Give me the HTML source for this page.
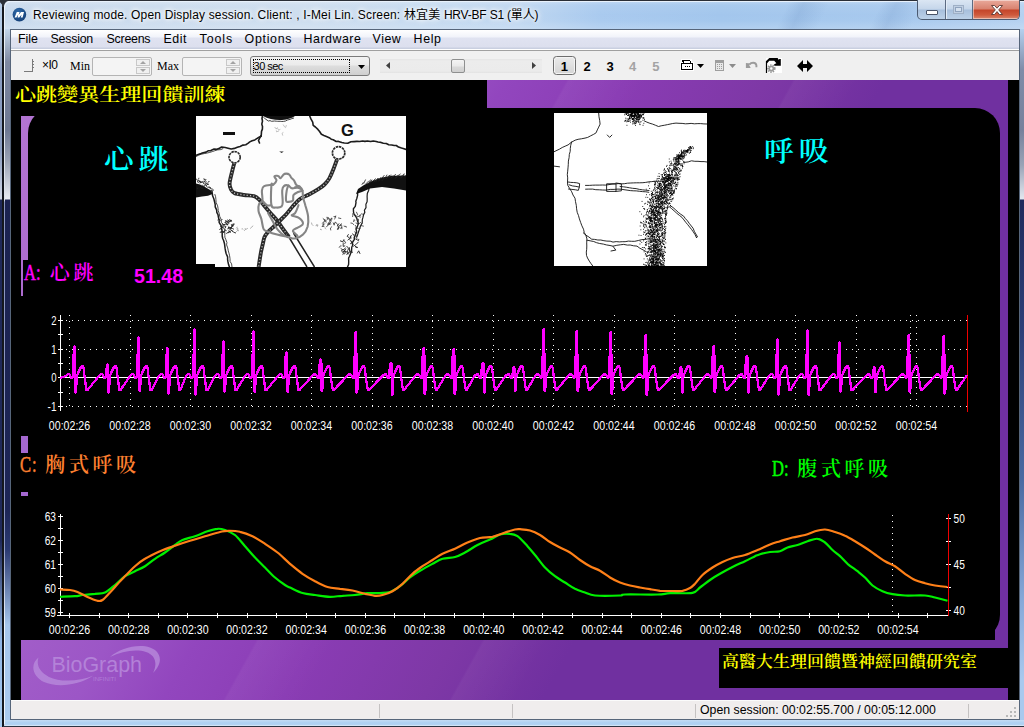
<!DOCTYPE html>
<html lang="zh-Hant">
<head>
<meta charset="utf-8">
<title>Reviewing mode. Open Display session.</title>
<style>
html,body{margin:0;padding:0;}
body{width:1024px;height:727px;overflow:hidden;position:relative;background:#b9d1ea;font-family:"Liberation Sans","Noto Sans CJK TC",sans-serif;font-size:12px;color:#000;}
.abs{position:absolute;}
#frame{left:0;top:0;width:1024px;height:727px;background:linear-gradient(90deg,#c6d8ec 0,#cbdcee 300px,#bcd5f0 520px,#a6c8ee 600px,#9fc4ec 720px,#a4c7ed 900px,#b2cff0 1024px);}
#titlegrad{left:4px;top:1px;width:1020px;height:28px;background:linear-gradient(115deg,rgba(60,100,160,0) 0,rgba(60,100,160,0) 76%,rgba(60,100,160,.13) 77.5%,rgba(60,100,160,0) 80%,rgba(60,100,160,0) 85%,rgba(60,100,160,.12) 86.5%,rgba(60,100,160,0) 89%),linear-gradient(180deg,rgba(255,255,255,.30) 0,rgba(255,255,255,.10) 4px,rgba(255,255,255,.04) 14px,rgba(255,255,255,.06) 20px,rgba(255,255,255,.2) 28px);}
#lglass{left:4px;top:29px;width:7px;height:691px;background:linear-gradient(180deg,#c3d6eb 0,#7f89a2 33px,#6e7892 101px,#99a1b3 131px,#e9ecf2 170px,#1b2250 171px,#1d2556 481px,#2b3a72 521px,#a6c6ec 596px,#aacbef 691px);}
#rglass{left:1019px;top:29px;width:5px;height:691px;background:linear-gradient(180deg,#b4d0ee 0,#7f8ca8 41px,#76819c 101px,#99a3b6 136px,#e3e7ef 170px,#202a5c 171px,#2d3f78 301px,#4a6aa2 451px,#86a8d8 571px,#a9c9ee 651px,#a9c9ee 691px);}
#lstrip0{left:0;top:0;width:2px;height:727px;background:linear-gradient(180deg,#b4cbe6 0,#b4cbe6 28px,#8a9cc0 70px,#8a9cc0 150px,#d0d6e4 199px,#1f2858 200px,#1f2858 540px,#8fb4e4 640px,#a8ccf0 727px);}
#lstrip1{left:2px;top:0;width:2px;height:727px;background:#14171d;}
#lstrip2{left:4px;top:2px;width:1px;height:722px;background:linear-gradient(180deg,#eef5fc 0,#dfe3ea 198px,#8c96c0 200px,#8c96c0 540px,#eef5fc 620px);}
#tstrip1{left:3px;top:0;width:1021px;height:1px;background:#2a2e36;}
#tstrip2{left:5px;top:1px;width:1019px;height:1px;background:#e8f1fb;}
#bstrip{left:3px;top:726px;width:1021px;height:1px;background:#2c3442;}
#bstrip2{left:5px;top:720px;width:1019px;height:6px;background:linear-gradient(180deg,#c4dcf4 0,#aed0f2 3px,#b4d3f2 5px,#f0f6fc 6px);}
#title{left:33px;top:7px;height:16px;line-height:16px;font-size:12px;white-space:nowrap;letter-spacing:0.17px;text-shadow:0 0 6px #fff,0 0 6px #fff,0 0 3px #fff;}
#client{left:11px;top:30px;width:1008px;height:689px;background:#f0f0f0;outline:1px solid #56657a;overflow:hidden;}
#cw{left:-1px;top:-1px;width:1009px;height:690px;}
#menubar{left:0;top:1px;width:1009px;height:19px;background:linear-gradient(180deg,#ffffff 0,#f1f3fa 7px,#e0e3f1 8px,#dcdfee 17px,#c9cfe0 18px,#c9cfe0 19px);border-bottom:1px solid #fff;}
.mi{position:absolute;top:1px;height:16px;line-height:16px;font-size:12.4px;white-space:nowrap;letter-spacing:-0.3px;}
#toolbar{left:0;top:21px;width:1009px;height:30px;background:#f0f0f0;border-top:1px solid #a0a0a0;box-sizing:border-box;}
#status{left:0;top:671px;width:1009px;height:19px;background:#f0eded;border-top:1px solid #fbfbfb;box-sizing:border-box;}
.sep{position:absolute;top:3px;width:1px;height:14px;background:#c5c2c2;}
#stext{left:690px;top:2px;font-size:12.3px;line-height:15px;white-space:nowrap;}
.spin{position:absolute;top:28px;height:17px;width:58px;border:1px solid #b4b4b4;border-radius:2px;background:#f4f4f4;}
.spin i{position:absolute;right:1px;width:14px;height:7px;border:1px solid #c8c8c8;background:#f0f0f0;box-sizing:border-box;}
.spin i.u::after{content:"";position:absolute;left:3px;top:1px;border-left:3px solid transparent;border-right:3px solid transparent;border-bottom:3px solid #a3a3a3;}
.spin i.d::after{content:"";position:absolute;left:3px;top:1px;border-left:3px solid transparent;border-right:3px solid transparent;border-top:3px solid #a3a3a3;}
.tb{position:absolute;font-size:12px;white-space:nowrap;}
.serif{font-family:"Liberation Serif","Noto Serif CJK SC",serif;}
.cjk{font-family:"Liberation Serif","Noto Serif CJK SC",serif;font-weight:600;white-space:nowrap;position:absolute;}
.hw{display:inline-block;width:12px;text-align:center;font-weight:400;font-size:23px;transform:scaleX(.72);transform-origin:0 50%;text-align:left;-webkit-text-stroke:0.5px currentColor;}
.fw{display:inline-block;width:23.6px;text-align:center;}
.capbtn{position:absolute;top:1px;height:18px;box-sizing:border-box;}
</style>
</head>
<body>
<div id="frame" class="abs"></div>
<div id="titlegrad" class="abs"></div>
<div id="lglass" class="abs"></div><div id="rglass" class="abs"></div><div id="lstrip0" class="abs"></div><div id="lstrip1" class="abs"></div><div id="lstrip2" class="abs"></div>
<div id="tstrip1" class="abs"></div><div id="tstrip2" class="abs"></div><div id="bstrip2" class="abs"></div><div id="bstrip" class="abs"></div>

<svg class="abs" style="left:0;top:0" width="12" height="10" viewBox="0 0 12 10"><path d="M0,0 H11 L8,1 C5.5,1.8 4.2,3.5 4,7 L2,7 L2,4.5 L0,2.2 Z" fill="#2b3038"/><path d="M10,1.6 C7,2 5,3.6 4.6,8" fill="none" stroke="#eef5fc" stroke-width="1"/></svg>
<!-- app icon -->
<svg class="abs" style="left:12px;top:7px" width="15" height="15" viewBox="0 0 15 15">
<defs><radialGradient id="ig" cx="0.4" cy="0.3" r="0.8"><stop offset="0" stop-color="#2f6aa8"/><stop offset="1" stop-color="#123c74"/></radialGradient></defs>
<circle cx="7.4" cy="7.6" r="6.8" fill="url(#ig)"/>
<path d="M2.6 10.4 L4.8 5 L7.6 5 L6.6 8 L9 5 L12 5 L10.6 10.4 L8.8 10.4 L9.6 7.6 L7.2 10.4 L5.6 10.4 L6.2 7.4 L4.4 10.4 Z" fill="#fff"/>
</svg>
<div id="title" class="abs">Reviewing mode. Open Display session. Client: , I-Mei Lin. Screen: 林宜美 <span style="letter-spacing:-0.2px">HRV-BF S1 (單人)</span></div>

<!-- caption buttons -->
<div class="abs" style="left:917px;top:0;width:103px;height:20px;border:1px solid #4b5a70;border-top:none;border-radius:0 0 5px 5px;box-sizing:border-box;overflow:hidden;background:linear-gradient(180deg,#dbe6f3 0,#c5d6ea 9px,#a7bfdc 10px,#bcd1e8 19px);">
  <div class="abs" style="left:27px;top:0;width:1px;height:19px;background:#5c6b82"></div>
  <div class="abs" style="left:28px;top:0;width:1px;height:19px;background:#e3ecf6"></div>
  <div class="abs" style="left:54px;top:0;width:1px;height:19px;background:#5c6b82"></div>
  <div class="abs" style="left:55px;top:0;width:47px;height:19px;background:linear-gradient(180deg,#e9a99b 0,#d8826f 9px,#c4452a 10px,#cf5a3c 15px,#dc8a70 19px);box-shadow:inset 0 0 0 1px rgba(255,255,255,.45);"></div>
  <div class="abs" style="left:8px;top:10px;width:10px;height:3px;background:#fff;border:1px solid #4a5468;border-radius:1px"></div>
  <div class="abs" style="left:35px;top:5px;width:9px;height:7px;border:1px solid #9fb0c6;background:#d5e1ef;box-shadow:inset 0 0 0 1px #c0cfe2, inset 0 0 0 2px #8fa3be;"></div>
  <svg class="abs" style="left:72px;top:4px" width="14" height="12" viewBox="0 0 14 12"><path d="M1.5 1.5 L4.6 1.5 L7 4.2 L9.4 1.5 L12.5 1.5 L8.7 5.9 L12.5 10.5 L9.4 10.5 L7 7.6 L4.6 10.5 L1.5 10.5 L5.3 5.9 Z" fill="#fff" stroke="#5a3630" stroke-width="0.9"/></svg>
</div>

<div id="client" class="abs"><div id="cw" class="abs">
  <div id="menubar" class="abs">
    <span class="mi" style="left:8.0px;letter-spacing:0.00px">File</span>
    <span class="mi" style="left:40.6px;letter-spacing:-0.25px">Session</span>
    <span class="mi" style="left:96.6px;letter-spacing:-0.25px">Screens</span>
    <span class="mi" style="left:153.6px;letter-spacing:0.50px">Edit</span>
    <span class="mi" style="left:189.6px;letter-spacing:0.90px">Tools</span>
    <span class="mi" style="left:234.6px;letter-spacing:0.70px">Options</span>
    <span class="mi" style="left:293.6px;letter-spacing:0.50px">Hardware</span>
    <span class="mi" style="left:362.6px;letter-spacing:0.50px">View</span>
    <span class="mi" style="left:403.6px;letter-spacing:0.60px">Help</span>
  </div>
  <div id="toolbar" class="abs"></div>
  <!-- toolbar contents, coordinates relative to client (x-10,y-29) -->
  <svg class="abs" style="left:12px;top:29px" width="12" height="15" viewBox="0 0 12 15" shape-rendering="crispEdges"><path d="M1.5 13.5 H10.5 V0.5 M10.5 3.5 h1 M10.5 6.5 h1 M10.5 9.5 h1" stroke="#7a7a7a" fill="none"/></svg>
  <div class="tb" style="left:32px;top:29px;font-size:12px;letter-spacing:-0.5px;">×I0</div>
  <div class="tb serif" style="left:60px;top:30px;font-size:12px;">Min</div>
  <div class="spin" style="left:82px"><i class="u" style="top:1px"></i><i class="d" style="top:9px"></i></div>
  <div class="tb serif" style="left:147px;top:30px;font-size:12px;">Max</div>
  <div class="spin" style="left:172px"><i class="u" style="top:1px"></i><i class="d" style="top:9px"></i></div>
  <!-- combo -->
  <div class="abs" style="left:240px;top:27px;width:118px;height:18px;border:1px solid #7a7a7a;border-radius:3px;background:linear-gradient(180deg,#f2f2f2 0,#ebebeb 8px,#dddddd 9px,#cfcfcf 18px);"></div>
  <div class="abs" style="left:243px;top:30px;width:95px;height:12px;border:1px dotted #000;"></div>
  <div class="tb" style="left:243.6px;top:30.5px;font-size:11px;line-height:13px;letter-spacing:-0.55px;">30 sec</div>
  <svg class="abs" style="left:348px;top:36px" width="7" height="4"><path d="M0 0 H7 L3.5 4 Z" fill="#000"/></svg>
  <!-- scrollbar -->
  <div class="abs" style="left:370px;top:30px;width:161.5px;height:14px;background:linear-gradient(180deg,#e4e4e4 0,#ececec 2px,#ebebeb 12px,#e2e2e2 14px);"></div>
  <svg class="abs" style="left:376px;top:33px" width="4" height="7"><path d="M4 0 V7 L0 3.5 Z" fill="#404040"/></svg>
  <svg class="abs" style="left:522px;top:33px" width="4" height="7"><path d="M0 0 V7 L4 3.5 Z" fill="#404040"/></svg>
  <div class="abs" style="left:440.5px;top:30px;width:12.5px;height:11.6px;border:1px solid #8e8f8f;border-radius:2px;background:linear-gradient(180deg,#f4f4f4 0,#e9e9e9 6px,#d9d9d9 7px,#d0d0d0 12px);"></div>
  <!-- page buttons -->
  <div class="abs" style="left:543.3px;top:27.2px;width:20.6px;height:17.2px;border:1px solid #6e6e6e;border-radius:3.5px;background:linear-gradient(180deg,#ebebeb,#d4d4d4);box-shadow:inset 0 0 0 1px #f4f4f4;"></div>
  <div class="tb" style="left:544.4px;top:29.5px;width:20px;text-align:center;font-size:13px;line-height:16px;font-weight:bold;color:#000;">1</div>
  <div class="tb" style="left:567.0px;top:29.5px;width:20px;text-align:center;font-size:13px;line-height:16px;font-weight:bold;color:#000;">2</div>
  <div class="tb" style="left:590.0px;top:29.5px;width:20px;text-align:center;font-size:13px;line-height:16px;font-weight:bold;color:#000;">3</div>
  <div class="tb" style="left:612.5px;top:29.5px;width:20px;text-align:center;font-size:13px;line-height:16px;font-weight:bold;color:#a3a3a3;">4</div>
  <div class="tb" style="left:635.9px;top:29.5px;width:20px;text-align:center;font-size:13px;line-height:16px;font-weight:bold;color:#a3a3a3;">5</div>
  <!-- printer -->
  <svg class="abs" style="left:670px;top:30px" width="14" height="12" viewBox="680 59 14 12" shape-rendering="crispEdges"><path d="M680,62 h14 v9 h-14 z M681,59 h11 v4 h-11 z" fill="#fff"/><path d="M682.5,60.5 H689.5 L691.5,63.5 H684 Z" fill="#fff" stroke="#000"/><path d="M681.5,63.5 H692.5 V69.5 H681.5 Z" fill="#fff" stroke="#000" stroke-width="1.2"/><path d="M685,66.5 h1 M687,66.5 h1 M689,66.5 h1" stroke="#000"/></svg>
  <svg class="abs" style="left:687px;top:35px" width="7" height="4"><path d="M0 0 H7 L3.5 4 Z" fill="#000"/></svg>
  <!-- calendar -->
  <svg class="abs" style="left:705px;top:31px" width="9" height="11" viewBox="0 0 9 11" shape-rendering="crispEdges"><path d="M0.5 0.5 H8.5 V10.5 H0.5 Z" fill="#e8e8e8" stroke="#9e9e9e"/><path d="M0 1.5 H9" stroke="#9e9e9e" stroke-width="2"/><path d="M2 4.5h1m1 0h1m1 0h1M2 6.5h1m1 0h1m1 0h1M2 8.5h1m1 0h1m1 0h1" stroke="#9e9e9e"/></svg>
  <svg class="abs" style="left:719px;top:35px" width="7" height="4"><path d="M0 0 H7 L3.5 4 Z" fill="#8c8c8c"/></svg>
  <!-- undo -->
  <svg class="abs" style="left:735px;top:32px" width="13" height="9" viewBox="745 61 13 9"><path d="M745.9,63 L750.7,63.4 L749.2,65 L750.7,67.9 L745.9,67.9 Z" fill="#9c9c9c"/><path d="M749.6,64.6 C751,62.2 755.6,61.8 756.4,65.2 L756.4,67.2" fill="none" stroke="#9c9c9c" stroke-width="1.9"/></svg>
  <!-- refresh -->
  <div class="abs" style="left:755.6px;top:28.7px;width:16.4px;height:15.3px;background:#fff;"></div>
  <svg class="abs" style="left:755px;top:28px" width="18" height="17" viewBox="765 57 18 17"><path d="M765.9,73 L765.9,61.3 L769.3,57.9 L777.6,57.9 L779.1,60.3 L779.1,58.9 L780.8,58.9 L780.8,65.7 L774.2,65.7 L774.2,64.3 L776.4,63.3 L774.2,60.8 L769.3,60.8 L767.1,63.3 L767.1,73 Z" fill="#000"/><circle cx="771.3" cy="68.6" r="3.1" fill="none" stroke="#999" stroke-width="2.4" stroke-dasharray="1.25 0.95"/><circle cx="771.3" cy="68.6" r="2.1" fill="none" stroke="#999" stroke-width="1.7"/></svg>
  <!-- double arrow -->
  <svg class="abs" style="left:787px;top:31px" width="16" height="12" viewBox="0 0 16 12"><path d="M0 6 L6 0 V4 H10 V0 L16 6 L10 12 V8 H6 V12 Z" fill="#000"/></svg>

  <div id="status" class="abs">
    <div class="sep" style="left:369px"></div>
    <div class="sep" style="left:502px"></div>
    <div class="sep" style="left:685px"></div>
    <div class="sep" style="left:958px"></div>
    <div id="stext" class="abs">Open session: 00:02:55.700 / 00:05:12.000</div>
    <svg class="abs" style="left:995px;top:5px" width="12" height="12" shape-rendering="crispEdges"><path d="M9 1h2v2h-2zM9 5h2v2h-2zM9 9h2v2h-2zM5 5h2v2h-2zM5 9h2v2h-2zM1 9h2v2h-2z" fill="#b8b8b8"/></svg>
  </div>
</div></div>

<!-- SCREEN -->
<div class="abs" id="screen" style="left:11px;top:80px;width:1008px;height:620px;background:#000;overflow:hidden;"><div class="abs" style="left:-1px;top:0;width:1009px;height:620px;">
  <!-- purple background 21..1008 -> local 11..998 -->
  <div class="abs" style="left:11px;top:0;width:987px;height:620px;background:linear-gradient(119deg,rgba(255,255,255,0) 0,rgba(255,255,255,0) 41%,rgba(255,255,255,.045) 41.2%,rgba(255,255,255,.0) 47%,rgba(255,255,255,0) 58%,rgba(255,255,255,.04) 58.2%,rgba(255,255,255,0) 63%),linear-gradient(119deg,#b478d4 0,#b070d0 5%,#9c56c6 30%,#9246be 36.5%,#8a3cb4 45.5%,#7e38a6 56%,#7030a0 65%,#7030a0 100%);"></div>
  <!-- black rounded panel x 28..1000 y 108..640 -->
  <div class="abs" style="left:18px;top:28px;width:972px;height:532px;background:#000;border-radius:25px;"></div>
  <!-- chart rects covering -->
  <div class="abs" style="left:11px;top:216px;width:974px;height:344px;background:#000;"></div>
  <div class="abs" style="left:13px;top:180px;width:100px;height:40px;background:#000;"></div>
  <!-- title label -->
  <div class="abs" style="left:0;top:0;width:477px;height:36px;background:#000;"></div>
  <!-- left-side black covers leaving purple bits -->
  <!-- bottom label box -->
  <div class="abs" style="left:709px;top:568px;width:300px;height:40px;background:#000;"></div>
</div></div>

<!-- purple bits on left below 295 -->
<div class="abs" style="left:21px;top:436px;width:7px;height:17px;background:#a468cf;"></div>
<div class="abs" style="left:21px;top:492px;width:7px;height:4px;background:#a468cf;"></div>

<!-- sketches -->
<svg class="abs" style="left:196px;top:116px" width="210" height="151" viewBox="0 0 210 151">
<rect width="210" height="151" fill="#fdfdfd"/>
<g fill="none" stroke="#1c1c1c" stroke-width="1.6" stroke-linecap="round" stroke-linejoin="round">
<path d="M-0.0,39.3 L2.9,38.3 L5.0,37.6 L7.2,36.7 L10.1,36.1 L12.1,34.8 L14.8,34.6 L18.1,33.1 L21.0,33.3 L23.4,32.2 L25.7,31.0 L29.2,31.5 L32.1,32.2 L35.2,33.0 L38.4,32.4 L41.3,31.3 L44.1,30.4 L47.0,29.1 L49.8,28.7 L51.9,27.4 L53.8,25.9 L56.1,24.7 L58.8,23.9 L62.0,21.8 L65.2,20.2 L65.5,15.4 L66.4,13.1 L66.5,10.5 L65.8,8.1 L66.5,5.1 L66.0,2.5 L66.4,0.0"/>
<path d="M0.4,40.4 L2.5,39.2 L5.3,38.2 L8.6,37.5 L11.2,37.0 L13.8,36.4 L16.3,35.6 L18.9,34.7 L21.6,33.9 L24.8,33.6 L27.0,32.6" stroke-width="0.8"/>
<path d="M64.8,19.9 L62.5,24.5 L63.5,27" />
<path d="M113.8,0.3 L114.9,2.9 L116.7,6.1 L117.2,9.3 L119.4,11.0 L121.9,13.4 L123.6,15.5 L125.4,18.3 L127.9,19.5 L130.4,20.5 L133.2,21.7 L135.2,23.2 L137.2,23.7 L140.2,25.5 L142.5,25.4 L145.9,26.5 L148.3,27.0 L151.8,27.2 L154.9,25.8 L158.1,25.6 L160.9,25.4 L163.6,25.5 L166.6,25.0 L168.9,25.4 L171.5,25.0 L174.6,25.5 L177.3,25.0 L180.2,25.5 L182.0,26.0 L185.0,26.4 L187.3,27.2 L190.3,27.5 L192.7,28.7 L195.8,29.0 L198.2,29.5 L200.3,29.5 L202.5,31.1 L205.5,32.1 L207.2,32.6 L210.0,33.4"/>
<path d="M15.9,74.6 L16.3,77.6 L16.6,79.8 L17.9,83.0 L18.5,85.5 L19.2,88.5 L19.2,90.9 L20.6,93.8 L20.8,96.3 L22.0,98.7 L22.4,101.1 L23.1,104.0 L23.2,106.6 L25.1,109.5 L25.5,111.6 L26.0,114.5 L26.2,117.4 L26.2,120.0 L26.7,122.5 L27.7,124.7 L28.5,127.7 L28.9,130.9 L29.1,132.4 L29.7,135.8 L30.2,137.7 L31.6,140.9 L31.6,143.7 L32.0,146.0 L32.5,148.3 L33.4,151.0" stroke-width="1.5"/>
<path d="M18.9,78.5 L19.6,80.7 L19.9,83.4 L20.1,86.5 L21.6,89.8 L22.1,92.7 L22.2,94.6 L23.2,97.4 L23.7,100.3 L25.0,103.1 L25.4,106.3 L27.0,108.5 L26.7,110.7 L28.4,113.4 L28.8,116.7 L28.8,119.5 L28.9,121.3 L29.9,123.7 L30.9,126.5 L30.6,128.9 L31.7,131.9 L32.3,134.9 L33.2,138.0 L33.6,139.8 L34.0,142.5 L34.1,145.5 L35.6,147.9 L36.0,151.0" stroke-width="0.8"/>
<path d="M161.6,76.5 L161.6,79.4 L160.8,82.5 L159.8,85.2 L160.0,86.7 L159.3,90.4 L157.4,92.7 L157.5,96.1 L158.0,97.8 L159.8,100.5 L160.8,102.3 L161.3,104.2 L162.4,107.5 L161.5,110.1 L160.1,113.2 L160.7,116.2 L159.3,118.7 L158.2,121.7 L158.4,123.4 L156.5,126.3 L156.6,129.5 L155.8,131.0 L155.6,133.7 L155.0,136.6 L153.5,140.3 L152.6,142.0 L152.7,145.8 L152.6,148.5 L151.5,151.0" stroke-width="1.4"/>
<path d="M173.1,72.0 L172.7,74.2 L171.3,77.5 L171.1,80.5 L171.2,83.0 L171.1,85.8 L169.9,88.2 L170.0,91.6 L168.4,94.2 L168.8,96.4 L167.6,98.6 L166.9,101.7 L166.3,103.7 L166.2,107.0 L164.4,110.2 L163.7,112.6 L162.9,114.8 L161.8,118.1 L160.8,121.0" stroke-width="1.2"/>
</g>
<path d="M67,0 C72,3.2 80,4.4 86,4 C92,3.6 96,2 99,0 Z" fill="#111"/>
<path d="M67.5,1.5 L68.4,2.1 L69.9,3.3 L72.4,5.0 L74.0,4.6 L75.6,5.3 L78.5,5.0 L80.3,5.2 L81.6,5.3 L84.2,5.3 L85.8,5.5 L87.5,5.4 L89.5,5.0 L91.7,3.9 L94.0,3.4 L95.9,2.6 L98.0,2.0" fill="none" stroke="#111" stroke-width="0.8"/>
<path d="M0,67.5 L4,68.5 L9,71 L15,74.5 L16.5,78 L12,79.8 L6,80.5 L0,81.5 Z" fill="#111"/>
<path d="M0.0,62.5 L1.1,64.1 L3.2,64.8 L5.0,65.8 L6.5,66.1 L7.8,67.9 L9.6,68.2 L10.2,70.1 L11.6,71.2 L14.0,71.0 L14.6,72.8 L16.2,72.9 L18.0,74.5" fill="none" stroke="#222" stroke-width="0.8"/>
<path d="M11.8,66.8 l1.3,-1.6 l-0.4,0.8 M1.2,64.8 l0.8,1.8 l2.1,-1.7 M7.6,69.8 l0.0,0.8 l-1.4,-1.9 M2.4,63.3 l0.2,0.1 l0.3,-1.6 M3.4,64.8 l1.5,2.2 l1.9,-1.8 M1.8,71.6 l-0.2,1.2 l-0.8,-0.1 M7.7,66.9 l0.4,-2.1 l0.9,1.5 M3.4,67.1 l1.1,-0.4 l-1.3,-1.5 M7.7,63.1 l1.7,1.3 l0.9,1.6 M9.2,66.6 l0.4,0.0 l2.1,1.3 M4.4,71.2 l1.1,1.2 l1.4,-0.4 M12.7,70.9 l0.9,1.2 l1.2,-0.4 M10.4,63.6 l-0.7,-0.1 l-2.2,-0.6 M9.3,68.6 l-1.2,2.0 l0.7,-0.7 M9.6,68.1 l0.1,-0.5 l2.2,0.6 M10.1,69.9 l2.1,-2.1 l0.5,1.1" fill="none" stroke="#222" stroke-width="0.8"/>
<path d="M210,59.5 L196,59.8 L186,61.5 L176,65 L168,69 L162,73 L160,78 L166,76 L174,72.5 L186,71 L198,72.5 L210,74.5 Z" fill="#111"/>
<path d="M165.8,68.8 l1.6,-2.5 M167.6,67.8 l2.0,-4.3 M169.5,68.2 l3.4,-3.4 M171.6,68.0 l3.1,-2.2 M172.9,67.8 l1.6,-4.3 M174.2,66.8 l1.8,-3.2 M176.3,65.6 l3.4,-3.1 M177.9,66.3 l2.2,-2.7 M179.8,65.8 l2.1,-3.8 M181.1,64.2 l2.0,-2.1 M182.7,65.3 l2.3,-4.2 M184.9,63.5 l3.5,-4.4 M186.0,64.8 l2.4,-3.2 M188.6,63.0 l2.5,-4.3 M190.0,63.1 l3.5,-4.0 M191.6,61.9 l2.7,-3.1 M192.9,61.4 l2.6,-2.3 M194.8,62.2 l2.4,-2.7 M196.7,61.3 l3.1,-3.3 M198.8,62.4 l3.0,-2.6 M199.6,62.3 l3.1,-3.6 M201.6,61.0 l2.9,-3.4 M203.5,61.8 l3.0,-2.5 M204.8,62.5 l3.3,-4.2 M206.3,60.6 l2.0,-3.1 M208.6,60.7 l2.6,-2.2" fill="none" stroke="#222" stroke-width="0.8"/>
<path d="M25.2,112.5 l0.3,0.7 l-0.7,-0.1 M26.9,107.8 l1.3,1.8 l-2.2,-2.0 M35.3,111.7 l1.4,-1.5 l-0.4,-1.3 M35.3,108.2 l0.8,2.5 l-0.9,0.3 M34.4,115.9 l-0.4,-0.7 l-2.1,2.0 M25.1,104.2 l0.3,-0.1 l1.0,-1.0 M34.9,104.1 l-1.5,0.8 l-2.2,-1.0 M34.1,112.7 l-1.1,-1.9 l-0.7,1.2 M29.1,104.6 l1.1,0.4 l2.2,2.3 M36.8,109.1 l1.6,-1.0 l-0.9,-0.5 M37.1,115.5 l-1.3,-0.7 l-0.7,-0.7 M29.5,108.4 l-1.6,0.3 l1.5,0.2 M35.7,110.9 l-1.7,1.3 l2.0,-1.1 M24.3,110.2 l0.2,0.4 l2.4,0.8 M35.3,103.9 l0.2,1.5 l-2.2,-2.2 M34.3,115.6 l-2.2,0.7 l-1.9,1.3 M33.1,106.4 l-1.5,1.4 l0.1,1.4 M29.5,107.7 l2.4,0.9 l-0.0,0.2 M34.1,112.9 l2.2,-0.5 l1.7,0.9 M35.9,114.3 l1.7,2.0 l2.4,0.7 M31.3,112.9 l1.6,-0.4 l-0.4,-1.8 M34.4,116.9 l-0.6,-1.7 l-1.5,-0.4 M28.1,116.6 l-2.3,-1.0 l-2.0,0.8 M34.9,105.5 l-2.3,-0.2 l0.4,2.1 M24.5,104.5 l-1.6,-1.5 l-1.4,1.1 M32.3,106.1 l-1.6,-1.1 l-1.7,1.3 M28.4,110.7 l1.6,-0.1 l-1.2,2.0 M36.8,107.8 l0.2,2.4 l-0.1,-1.5 M24.7,116.3 l1.6,-0.6 l0.1,0.1 M27.8,116.9 l0.8,-1.4 l-2.5,-0.1 M29.2,114.2 l1.1,0.6 l-1.8,-1.8 M28.5,106.6 l1.9,0.1 l0.7,2.6 M27.7,110.5 l-1.8,1.4 l-2.6,1.7 M35.8,114.5 l-2.2,-1.2 l1.1,-2.1" fill="none" stroke="#222" stroke-width="0.9"/>
<path d="M48.6,112.8 l1.8,0.3 l1.4,-0.8 M54.2,112.5 l1.7,-1.6 l1.3,-1.2 M49.8,113.2 l-1.4,1.3 l-0.8,-0.8 M41.4,111.8 l-0.1,0.9 l-0.6,0.7 M41.9,112.4 l-0.2,1.9 l1.3,0.6 M40.2,112.3 l0.8,-1.1 l0.3,-0.2 M40.2,115.9 l1.2,-1.2 l0.5,-0.8 M46.8,113.2 l-0.8,-0.7 l-0.4,0.7" fill="none" stroke="#999" stroke-width="0.8"/>
<path d="M119.6,109.6 l0.9,-0.7 l1.8,0.3 M126.1,110.7 l1.3,-1.6 l-1.4,-1.6 M125.5,113.7 l-1.3,-0.4 l1.3,0.4 M117.3,109.8 l-1.4,-1.5 l-0.4,-1.7 M128.9,111.4 l0.0,0.6 l1.1,1.3 M121.4,110.7 l-0.4,-1.9 l-0.4,0.8" fill="none" stroke="#999" stroke-width="0.8"/>
<path d="M149.6,110.3 l1.0,0.7 l-2.9,-1.0 M134.2,108.5 l-2.4,-0.7 l0.1,1.7 M145.8,107.9 l-2.0,1.6 l2.4,0.3 M134.5,106.5 l-2.1,1.3 l2.9,0.1 M143.2,110.9 l-1.8,2.7 l0.8,-1.8 M128.0,103.2 l0.5,1.2 l-1.0,2.6 M134.7,106.0 l-2.3,2.8 l-2.2,2.4 M139.0,107.3 l0.4,-1.4 l2.5,3.0 M145.6,107.8 l-2.3,1.9 l-1.3,2.4 M131.8,107.5 l2.0,-1.9 l0.3,-2.5 M126.8,102.3 l2.9,2.6 l1.0,-1.2 M142.1,109.6 l-0.7,0.6 l1.8,-2.9 M130.8,106.1 l-2.1,-0.7 l0.4,-2.0 M138.5,103.4 l0.4,-1.0 l0.9,-2.8 M142.1,101.9 l2.8,0.6 l-0.2,-0.5 M141.0,109.0 l1.5,1.5 l-0.1,3.0 M146.1,111.1 l-0.5,-0.4 l0.4,2.4 M138.6,106.8 l-0.4,2.4 l-1.1,-2.7 M143.4,111.7 l1.4,0.6 l1.5,-1.2 M140.2,100.9 l-2.3,-0.3 l0.0,-0.6 M127.2,109.0 l0.2,-1.6 l-1.2,-0.6 M131.7,100.9 l2.5,2.8 l1.0,2.2 M136.1,110.5 l-1.7,1.5 l0.4,2.4 M128.4,110.3 l-2.3,0.2 l2.7,-3.0 M131.9,103.9 l-1.1,-2.6 l2.4,1.9 M135.5,104.6 l0.5,-2.7 l-2.8,2.4" fill="none" stroke="#333" stroke-width="0.8"/>
<path d="M150.5,130.0 l3.0,3.3 l-0.2,-2.1 M150.3,138.5 l2.8,-2.1 l2.4,-1.0 M153.5,123.4 l2.7,3.5 l-2.1,0.9 M148.4,137.6 l-3.1,-2.8 l1.6,-1.3 M161.2,137.4 l1.5,-2.6 l1.4,3.1 M153.0,121.6 l-1.9,-1.3 l1.5,-2.1 M148.3,124.7 l1.2,2.0 l-0.9,1.1 M160.9,131.8 l-1.9,-1.4 l3.0,1.2 M150.0,132.8 l-2.9,3.4 l-0.4,0.2 M154.6,120.9 l0.7,-1.5 l-1.7,2.1 M146.6,125.7 l1.8,-1.8 l-1.5,0.3 M148.4,137.9 l3.4,-3.3 l-0.3,1.8 M151.9,138.6 l-0.0,-2.2 l0.4,1.0 M151.5,133.2 l2.0,0.1 l0.0,2.4 M157.3,130.4 l3.2,-2.3 l2.0,-2.3 M155.9,124.7 l-0.4,1.9 l2.0,2.0 M149.2,129.8 l-2.0,0.6 l-0.0,-3.3 M155.7,134.3 l0.5,2.6 l-2.2,-2.4 M145.3,129.9 l-0.5,-0.4 l-1.7,2.1 M146.3,138.1 l0.5,0.3 l2.0,-1.8 M147.6,126.2 l-3.2,-1.3 l0.8,0.2 M149.8,131.8 l-2.9,2.2 l-2.3,-1.7 M147.9,133.8 l2.3,2.0 l-3.1,-0.6 M151.6,124.3 l3.3,-3.2 l-0.1,1.8 M162.8,122.9 l-0.3,1.7 l-3.2,-1.8 M161.0,122.8 l-0.7,-1.4 l-0.5,-3.0" fill="none" stroke="#222" stroke-width="0.9"/>
<path d="M156.4,117.9 l1.6,1.4 l-1.6,-1.5 M162.6,102.8 l-0.2,2.6 l-0.8,-1.0 M167.8,110.2 l-2.8,-0.6 l0.9,-2.6 M160.1,111.9 l2.2,0.5 l2.3,-0.2 M160.7,114.9 l-0.7,1.7 l-1.7,-0.9 M158.2,109.0 l-2.0,-1.8 l-1.7,-0.2 M159.7,106.9 l3.0,1.1 l2.2,-1.8 M160.6,99.5 l1.1,-0.8 l-1.4,-2.9 M158.2,103.2 l-0.6,2.5 l1.3,-1.4 M160.3,101.1 l2.6,-0.8 l1.6,1.3 M166.9,98.4 l-1.1,-0.7 l-2.5,2.3 M159.9,113.4 l0.1,-2.7 l-0.6,-1.6 M156.5,101.0 l0.6,-2.8 l-1.1,-0.5 M162.5,100.7 l1.2,-1.4 l1.4,1.0" fill="none" stroke="#333" stroke-width="0.8"/>
<path d="M81.6,11.4 l-1.1,1.1 l-0.5,-0.6 M89.5,11.6 l-1.0,-0.8 l-1.4,-2.3 M80.3,14.4 l0.3,1.5 l2.4,-1.0 M87.4,16.4 l-1.4,0.9 l0.8,2.3 M89.6,11.6 l0.7,-2.1 l-0.4,-0.5 M80.7,12.7 l-0.9,-0.0 l-1.1,-1.7 M84.4,13.3 l-1.7,0.8 l-1.3,-2.0" fill="none" stroke="#aaa" stroke-width="0.7"/>
<path d="M83.2,35.5 h4.5 l-2,1.6 z" fill="#222"/>
<rect x="27" y="16" width="12" height="3" fill="#111"/>
<text x="145" y="19.5" font-family="Liberation Sans, sans-serif" font-weight="bold" font-size="16.5" fill="#111">G</text>
<path d="M38.3,47.0 C37.9,48.5 36.8,52.6 36.0,56.0 C35.2,59.4 33.8,64.4 33.6,67.3 C33.4,70.2 34.2,71.9 35.0,73.5 C35.8,75.1 36.4,76.2 38.6,77.1 C40.8,78.0 44.8,78.5 48.0,79.0 C51.2,79.5 55.4,79.4 58.0,80.2 C60.6,81.0 62.0,82.6 63.5,84.0 C65.0,85.4 65.5,86.3 67.3,88.4 C69.0,90.5 71.7,93.8 74.0,96.5 C76.3,99.2 79.1,102.0 81.3,104.7 C83.5,107.5 85.0,110.3 87.0,113.0 C89.0,115.7 92.0,119.8 93.0,121.1" fill="none" stroke="#2a2a2a" stroke-width="3.9" stroke-linejoin="round"/>
<path d="M38.3,47.0 C37.9,48.5 36.8,52.6 36.0,56.0 C35.2,59.4 33.8,64.4 33.6,67.3 C33.4,70.2 34.2,71.9 35.0,73.5 C35.8,75.1 36.4,76.2 38.6,77.1 C40.8,78.0 44.8,78.5 48.0,79.0 C51.2,79.5 55.4,79.4 58.0,80.2 C60.6,81.0 62.0,82.6 63.5,84.0 C65.0,85.4 65.5,86.3 67.3,88.4 C69.0,90.5 71.7,93.8 74.0,96.5 C76.3,99.2 79.1,102.0 81.3,104.7 C83.5,107.5 85.0,110.3 87.0,113.0 C89.0,115.7 92.0,119.8 93.0,121.1" fill="none" stroke="#c4c4c4" stroke-width="1.3" stroke-dasharray="1.1 2.1"/>
<path d="M141.0,43.5 C140.4,45.1 138.8,49.8 137.5,53.0 C136.2,56.2 134.7,60.0 133.2,62.6 C131.7,65.2 130.3,66.7 128.5,68.5 C126.7,70.3 124.9,71.5 122.3,73.2 C119.7,74.9 115.9,77.0 113.0,78.5 C110.1,80.0 107.4,80.6 104.7,82.5 C102.0,84.4 99.3,87.5 97.0,90.0 C94.7,92.5 93.0,95.2 90.7,97.7 C88.5,100.2 85.8,102.7 83.5,105.0 C81.2,107.3 78.6,109.9 76.7,111.7 C74.8,113.5 73.4,114.4 72.0,116.0 C70.6,117.6 69.4,119.1 68.5,121.1 C67.6,123.1 67.4,125.5 66.8,128.0 C66.2,130.5 65.7,132.2 65.0,136.0 C64.3,139.8 63.0,148.5 62.6,151.0" fill="none" stroke="#2a2a2a" stroke-width="3.9" stroke-linejoin="round"/>
<path d="M141.0,43.5 C140.4,45.1 138.8,49.8 137.5,53.0 C136.2,56.2 134.7,60.0 133.2,62.6 C131.7,65.2 130.3,66.7 128.5,68.5 C126.7,70.3 124.9,71.5 122.3,73.2 C119.7,74.9 115.9,77.0 113.0,78.5 C110.1,80.0 107.4,80.6 104.7,82.5 C102.0,84.4 99.3,87.5 97.0,90.0 C94.7,92.5 93.0,95.2 90.7,97.7 C88.5,100.2 85.8,102.7 83.5,105.0 C81.2,107.3 78.6,109.9 76.7,111.7 C74.8,113.5 73.4,114.4 72.0,116.0 C70.6,117.6 69.4,119.1 68.5,121.1 C67.6,123.1 67.4,125.5 66.8,128.0 C66.2,130.5 65.7,132.2 65.0,136.0 C64.3,139.8 63.0,148.5 62.6,151.0" fill="none" stroke="#c4c4c4" stroke-width="1.3" stroke-dasharray="1.1 2.1"/>
<path d="M91,118 L111,151 M97.5,117 L118.5,151" fill="none" stroke="#222" stroke-width="1.5"/>
<circle cx="38.6" cy="41.2" r="5.6" fill="#fdfdfd" stroke="#2a2a2a" stroke-width="1.6" stroke-dasharray="2.5 0.7"/>
<circle cx="142.6" cy="36.9" r="6.2" fill="#fdfdfd" stroke="#2a2a2a" stroke-width="1.7" stroke-dasharray="2.5 0.7"/>
<g fill="none" stroke="#858585" stroke-width="2.1" stroke-linejoin="round" stroke-linecap="round">
<path d="M99.1,71.2 C99.9,71.1 102.4,70.1 103.7,70.6 C104.9,71.2 105.9,72.8 106.5,74.6 C107.0,76.4 106.6,78.9 107.0,81.3 C107.5,83.8 108.5,86.0 109.3,89.2 C110.2,92.4 111.8,97.0 112.1,100.5 C112.5,104.1 112.4,107.7 111.6,110.7 C110.7,113.7 109.1,116.6 107.0,118.6 C105.0,120.6 101.8,122.2 99.1,122.5 C96.5,122.9 94.3,121.5 91.2,120.8 C88.2,120.2 84.5,119.5 81.1,118.6 C77.7,117.7 73.2,116.1 70.9,115.2 C68.7,114.3 68.5,115.0 67.5,112.9 C66.6,110.9 66.1,105.8 65.3,102.8 C64.4,99.8 62.8,97.3 62.5,94.9 C62.1,92.4 62.4,89.8 63.0,88.1 C63.7,86.4 65.9,87.0 66.4,84.7 C66.9,82.5 65.6,77.0 65.9,74.6 C66.1,72.1 66.5,71.0 68.1,70.1 C69.7,69.1 74.2,69.1 75.4,68.9"/>
<path d="M103.7,70.6 C103.1,70.3 101.2,70.0 100.3,68.9 C99.3,67.9 98.9,65.6 98.0,64.4 C97.2,63.2 95.9,62.5 95.2,61.6 C94.4,60.7 94.3,59.4 93.5,58.8 C92.7,58.1 91.2,57.6 90.1,57.6 C89.1,57.6 88.2,58.0 87.3,58.8 C86.4,59.5 85.3,62.0 84.5,62.2 C83.6,62.3 83.3,60.2 82.2,59.9 C81.2,59.6 78.5,59.7 78.3,60.5 C78.0,61.2 80.7,63.0 80.5,64.4 C80.3,65.8 78.0,68.2 77.1,68.9 C76.3,69.7 75.7,65.5 75.4,68.9 C75.2,72.3 74.7,85.5 75.4,89.2 C76.2,93.0 78.3,91.3 80.0,91.5 C81.7,91.7 84.5,91.3 85.6,90.4 C86.7,89.4 86.6,88.5 86.7,85.9 C86.8,83.2 86.0,77.2 86.2,74.6 C86.4,71.9 86.8,70.9 87.9,70.1 C88.9,69.2 91.1,69.1 92.4,69.5 C93.7,69.9 94.3,71.9 95.8,72.3 C97.3,72.7 99.7,71.6 101.4,71.8 C103.1,71.9 105.2,73.2 105.9,73.4"/>
<path d="M92.4,69.5 C92.1,70.3 91.1,72.0 90.7,74.6 C90.3,77.1 89.8,82.9 90.1,84.7 C90.4,86.6 91.2,85.9 92.4,85.9 C93.5,85.9 96.0,85.9 96.9,84.7 C97.7,83.6 96.7,80.5 97.5,79.1 C98.2,77.7 99.9,77.0 101.4,76.3 C102.9,75.5 105.6,74.9 106.5,74.6"/>
<path d="M102.5,89.2 C102.0,90.6 100.3,95.5 99.1,97.1 C98.0,98.8 95.2,98.7 95.8,99.4 C96.3,100.2 100.7,100.3 102.5,101.7 C104.4,103.0 106.9,105.8 107.0,107.3 C107.2,108.8 105.0,109.8 103.7,110.7 C102.3,111.6 100.3,112.2 99.1,112.9 C98.0,113.7 96.5,114.1 96.9,115.2 C97.3,116.3 100.7,119.0 101.4,119.7"/>
<path d="M72.1,97.1 C72.8,98.5 75.1,102.4 76.6,105.0 C78.1,107.7 79.2,110.5 81.1,112.9 C83.0,115.4 86.7,118.6 87.9,119.7"/>
<path d="M66.4,84.7 C67.2,85.5 69.4,88.5 70.9,89.2 C72.4,90.0 74.7,89.2 75.4,89.2"/>
</g>
</svg>
<svg class="abs" style="left:554px;top:113px" width="153" height="153" viewBox="0 0 153 153">
<rect width="153" height="153" fill="#fff"/>
<g fill="none" stroke="#111" stroke-width="0.9" stroke-linecap="round" stroke-linejoin="round">
<path d="M44.7,-0.0 L45.0,3.8 L45.7,7.6 L46.1,11.1 L44.7,14.1 L43.3,16.9 L42.1,19.8 L39.7,21.3 L36.7,22.8 L33.7,24.4 L31.0,25.1 L27.4,25.8 L24.1,26.3 L21.1,27.2 L17.3,29.3 L14.1,31.9 L11.1,33.2 L8.2,34.5 L5.4,36.2 L3.0,37.3 L0.0,38.8"/>
<path d="M17.6,29.0 L16.7,32.4 L16.3,35.4 L16.2,38.4 L15.3,41.5 L15.1,44.6 L14.4,48.1 L14.3,51.3 L14.0,54.9 L13.7,58.2 L13.3,61.6 L13.7,64.9 L13.5,68.8 L13.7,72.2 L15.7,75.5 L17.7,78.8 L19.0,82.0 L21.0,85.2 L21.5,88.6 L22.3,92.4 L22.6,95.8 L23.2,99.3 L24.5,102.6 L25.4,105.9 L26.7,109.6 L27.9,112.8 L29.5,116.2 L30.3,119.6 L31.9,122.3 L32.9,125.7"/>
<path d="M-0.1,53.1 L5.5,53.8"/>
<path d="M53.3,22.0 L55.6,24.4 L57.9,22.1"/>
<path d="M90.1,7.8 L92.8,9.1 L95.9,10.3 L98.6,11.1 L101.6,12.3 L104.5,13.5 L107.2,12.8 L110.7,12.2 L113.6,11.6 L118.7,10.5 L122.0,10.1 L125.0,10.3 L128.1,10.4 L131.4,10.8 L134.0,10.7 L137.1,10.4 L140.4,10.8 L143.9,10.6 L146.6,10.6 L149.9,10.9 L153.0,11.0"/>
<path d="M130.4,49.4 L134.2,48.9 L137.5,47.8 L140.8,48.3 L144.0,48.3 L147.0,48.6 L150.1,48.6 L153.0,49.0"/>
<path d="M31.5,72.4 L35.3,72.4 L38.4,72.2 L41.7,72.1 L45.2,72.1 L48.6,72.0 L51.7,72.1 L55.0,71.6 L58.0,71.1 L61.6,70.9 L64.2,70.6 L67.5,70.9 L70.3,70.7 L73.5,70.2 L76.8,70.0 L79.4,69.9 L82.7,69.8 L85.6,69.8 L88.9,69.7 L91.7,69.4 L94.9,68.8 L97.8,68.6 L101.2,68.2 L104.6,68.4 L108.0,68.0"/>
<path d="M31.6,76.2 L34.8,76.1 L38.7,76.1 L41.8,76.7 L45.3,76.8 L48.5,77.0 L52.1,77.1 L56.2,76.4 L60.1,76.4 L63.9,76.1 L67.1,76.2 L70.0,76.7 L73.0,77.1 L76.3,77.6 L79.2,77.8 L82.3,77.9 L85.7,78.3 L88.4,78.6 L91.8,78.8 L94.8,79.3"/>
<path d="M66.1,73.5 L69.3,73.8 L72.2,74.2 L75.6,74.8 L78.6,75.3 L82.1,75.6 L85.4,76.4 L88.4,76.8 L91.7,77.2 L95.0,77.5"/>
<path d="M13.6,68.9 L16.7,69.4 L19.6,69.5 L22.8,69.8 L25.6,70.6 L25.4,73.9 L24.3,77.4 L21.5,76.8 L17.9,76.4 L14.5,76.0"/>
<path d="M15.1,71.8 L18.4,72.9 L21.9,73.4 L25.0,74.0"/>
<path d="M29.3,119.8 L31.8,122.1 L34.9,124.0 L37.7,126.2 L40.6,126.4 L43.8,127.0 L46.8,127.0 L49.9,127.7 L52.9,128.1 L56.2,128.2 L59.0,129.1 L62.2,128.6 L65.3,128.9 L68.2,128.7 L71.1,128.7 L74.4,128.1 L77.6,128.3 L80.8,128.3 L84.3,127.5 L87.9,126.6 L91.4,126.4 L94.8,125.7"/>
<path d="M32.8,127.1 L36.1,127.8 L39.7,128.5 L42.6,129.7 L45.7,130.5 L49.4,131.1 L52.3,131.9 L56.0,132.5 L59.0,133.2 L62.8,132.3 L66.3,131.8 L69.7,131.4 L73.4,132.1 L76.2,132.0 L79.6,132.8 L83.0,133.1 L85.8,135.2 L89.1,136.9 L92.4,138.8"/>
<path d="M59.2,133.6 L61.8,137.1 L57.0,138.0"/>
<path d="M32.9,126.6 L32.7,129.9 L32.8,133.0 L32.7,136.3 L32.3,139.1 L32.5,142.4 L33.5,145.0 L35.3,148.1 L36.8,150.3 L38.8,153.0"/>
<path d="M115.3,93.7 L117.7,95.7 L120.1,97.8 L122.6,100.1 L125.4,102.4 L127.9,104.3 L129.9,106.9 L131.7,109.2 L133.6,111.5 L135.6,114.0 L137.5,116.4 L139.3,118.9 L141.1,121.7 L142.4,124.5"/>
<path d="M116.6,92.9 L119.1,94.6 L121.7,96.9 L124.3,99.4 L126.8,101.3 L129.6,103.1 L131.3,105.5 L133.5,107.9 L135.2,110.3 L137.3,113.0 L139.1,115.2 L140.3,118.3 L141.8,120.9 L143.5,123.9 L142.4,124.5"/>
<path d="M53,70.8 h9 v7.6 h-9 z M62,70 l5.4,0.8 v7 l-5.4,0.6" />
</g>
<path d="M109.5,125.4h.9 M96.2,87.0h.9 M111.4,129.9h.9 M98.6,131.9h.9 M115.5,52.8h.9 M117.2,68.3h.9 M104.9,120.7h.9 M118.3,77.4h.9 M123.5,71.1h.9 M123.2,49.9h.9 M106.4,76.6h.9 M121.2,62.7h.9 M98.4,123.2h.9 M102.8,107.5h.9 M107.2,140.2h.9 M99.8,151.5h.9 M107.8,77.1h.9 M118.9,46.5h.9 M105.6,115.2h.9 M110.4,78.9h.9 M107.7,117.2h.9 M103.9,85.7h.9 M99.2,88.6h.9 M117.1,58.5h.9 M101.4,106.8h.9 M110.1,84.9h.9 M122.4,51.8h.9 M103.8,91.5h.9 M98.2,111.3h.9 M128.3,44.8h.9 M104.0,127.0h.9 M112.1,60.8h.9 M104.0,96.6h.9 M113.0,55.6h.9 M110.8,98.9h.9 M97.4,127.5h.9 M102.8,138.5h.9 M97.7,88.4h.9 M109.0,120.1h.9 M121.4,64.6h.9 M102.0,117.8h.9 M115.7,77.2h.9 M98.9,88.1h.9 M89.9,95.8h.9 M112.2,72.3h.9 M106.0,109.6h.9 M96.1,125.1h.9 M96.8,123.5h.9 M111.2,104.8h.9 M108.8,93.2h.9 M98.1,143.8h.9 M102.1,97.0h.9 M100.2,110.6h.9 M103.9,119.9h.9 M109.6,71.8h.9 M99.9,151.6h.9 M99.1,148.2h.9 M125.0,61.3h.9 M111.2,84.9h.9 M117.7,70.4h.9 M97.0,150.8h.9 M97.6,135.6h.9 M109.5,60.2h.9 M112.5,94.4h.9 M102.1,107.0h.9 M112.6,100.1h.9 M107.3,100.9h.9 M99.1,120.0h.9 M106.3,147.3h.9 M93.4,102.7h.9 M99.7,102.4h.9 M96.0,110.3h.9 M109.4,68.1h.9 M107.9,152.7h.9 M115.5,52.5h.9 M97.0,139.8h.9 M129.9,44.7h.9 M91.0,131.8h.9 M103.7,134.9h.9 M100.4,126.0h.9 M117.5,57.0h.9 M107.6,128.0h.9 M114.8,63.9h.9 M117.5,73.9h.9 M110.6,77.8h.9 M105.2,131.5h.9 M117.9,58.2h.9 M111.2,88.3h.9 M109.8,83.7h.9 M95.3,86.4h.9 M109.7,95.2h.9 M101.2,140.6h.9 M94.5,152.4h.9 M109.3,140.9h.9 M105.8,148.0h.9 M105.4,78.7h.9 M105.5,81.5h.9 M105.0,110.4h.9 M101.2,139.4h.9 M102.4,145.0h.9 M105.4,105.3h.9 M85.8,128.3h.9 M100.8,137.3h.9 M102.9,74.5h.9 M99.9,76.0h.9 M121.9,48.5h.9 M92.7,106.3h.9 M102.1,146.6h.9 M110.9,87.5h.9 M99.3,141.1h.9 M106.4,83.1h.9 M96.7,142.3h.9 M90.2,90.9h.9 M127.0,40.4h.9 M106.9,108.6h.9 M104.2,141.1h.9 M105.0,123.9h.9 M92.0,108.5h.9 M98.2,108.4h.9 M124.6,66.1h.9 M98.2,152.3h.9 M91.7,121.6h.9 M116.4,79.5h.9 M102.4,117.2h.9 M128.0,55.1h.9 M122.0,75.6h.9 M101.9,102.4h.9 M99.5,136.1h.9 M96.0,108.2h.9 M104.4,123.5h.9 M98.4,128.7h.9 M104.7,137.4h.9 M108.8,142.6h.9 M103.6,85.8h.9 M111.7,58.5h.9 M109.1,72.1h.9 M123.8,44.8h.9 M111.2,88.2h.9 M94.6,139.6h.9 M104.9,116.9h.9 M97.2,117.7h.9 M110.3,72.4h.9 M101.9,124.6h.9 M97.7,83.4h.9 M105.4,138.3h.9 M114.6,70.0h.9 M99.4,93.3h.9 M108.0,61.5h.9 M120.9,51.3h.9 M101.1,111.7h.9 M115.4,67.0h.9 M112.3,97.9h.9 M96.7,126.8h.9 M105.5,107.9h.9 M110.0,90.3h.9 M97.3,150.0h.9 M98.7,124.6h.9 M88.3,93.5h.9 M94.4,118.0h.9 M108.4,123.0h.9 M105.1,99.5h.9 M110.1,134.7h.9 M100.4,133.5h.9 M94.2,109.2h.9 M98.2,124.9h.9 M86.1,109.2h.9 M98.8,147.1h.9 M111.3,109.3h.9 M93.6,117.3h.9 M109.0,131.5h.9 M111.3,68.6h.9 M113.6,68.2h.9 M116.6,65.3h.9 M114.0,69.8h.9 M103.5,134.6h.9 M108.8,140.6h.9 M96.3,95.4h.9 M106.5,74.2h.9 M95.2,89.2h.9 M118.0,67.6h.9 M101.1,151.5h.9 M122.4,56.7h.9 M102.1,111.6h.9 M100.7,115.2h.9 M120.7,56.4h.9 M109.3,89.5h.9 M105.4,86.4h.9 M109.1,91.0h.9 M96.8,128.0h.9 M100.8,112.1h.9 M98.4,88.0h.9 M100.5,134.6h.9 M110.2,80.5h.9 M95.2,150.9h.9 M95.9,128.2h.9 M103.7,150.0h.9 M97.7,146.0h.9 M101.8,137.8h.9 M110.9,69.7h.9 M101.1,95.1h.9 M119.0,70.2h.9 M96.2,106.2h.9 M121.4,48.0h.9 M98.6,97.9h.9 M105.6,103.6h.9 M109.4,57.2h.9 M114.8,46.0h.9 M103.2,122.3h.9 M97.2,137.8h.9 M98.3,123.1h.9 M120.2,66.1h.9 M109.7,67.3h.9 M98.2,147.9h.9 M117.5,52.4h.9 M128.6,43.4h.9 M99.2,117.0h.9 M96.1,114.6h.9 M114.5,58.4h.9 M95.9,97.0h.9 M110.8,57.6h.9 M127.2,43.2h.9 M98.0,129.1h.9 M113.8,67.2h.9 M116.9,64.4h.9 M105.0,71.3h.9 M100.8,102.2h.9 M97.3,145.9h.9 M108.1,94.4h.9 M100.8,138.8h.9 M104.9,136.0h.9 M109.7,150.1h.9 M116.0,92.8h.9 M111.0,117.4h.9 M112.6,68.4h.9 M96.8,120.0h.9 M109.3,70.9h.9 M112.2,67.8h.9 M96.7,105.0h.9 M127.1,38.3h.9 M110.4,123.5h.9 M97.2,151.6h.9 M103.5,126.7h.9 M102.7,136.0h.9 M116.3,84.1h.9 M102.5,136.9h.9 M102.0,132.3h.9 M105.9,81.7h.9 M114.1,61.9h.9 M99.3,115.7h.9 M103.3,146.9h.9 M99.4,137.1h.9 M127.8,52.3h.9 M104.1,109.6h.9 M101.5,149.7h.9 M90.2,114.7h.9 M115.9,86.4h.9 M105.2,81.9h.9 M97.5,113.7h.9 M103.4,97.3h.9 M116.1,64.5h.9 M120.3,54.7h.9 M105.8,143.3h.9 M112.4,62.7h.9 M110.3,62.2h.9 M103.6,98.8h.9 M107.4,147.6h.9 M105.7,149.9h.9 M101.9,151.0h.9 M106.3,83.5h.9 M91.8,131.7h.9 M117.6,64.4h.9 M101.0,84.1h.9 M103.6,75.0h.9 M97.1,152.8h.9 M99.0,88.0h.9 M107.2,134.5h.9 M103.1,93.3h.9 M105.3,141.5h.9 M112.4,74.1h.9 M107.0,78.1h.9 M109.6,66.0h.9 M102.5,114.2h.9 M116.0,62.8h.9 M92.6,105.4h.9 M94.1,99.1h.9 M120.1,76.9h.9 M113.0,63.3h.9 M102.9,152.6h.9 M101.4,95.1h.9 M98.1,113.3h.9 M102.7,133.6h.9 M102.6,142.3h.9 M102.9,105.4h.9 M124.2,41.4h.9 M124.1,48.2h.9 M93.5,102.9h.9 M103.0,120.8h.9 M128.4,43.3h.9 M114.0,77.8h.9 M100.0,140.1h.9 M114.6,78.3h.9 M107.3,74.3h.9 M99.0,89.6h.9 M101.9,124.1h.9 M120.4,50.3h.9 M101.0,150.1h.9 M112.5,86.2h.9 M119.5,63.9h.9 M110.2,74.9h.9 M98.5,132.5h.9 M107.1,90.3h.9 M96.9,117.2h.9 M101.7,140.6h.9 M97.8,132.3h.9 M104.5,145.3h.9 M103.0,145.9h.9 M106.7,74.5h.9 M108.2,91.0h.9 M105.2,80.6h.9 M110.2,62.0h.9 M114.9,61.7h.9 M103.9,89.7h.9 M96.3,129.2h.9 M102.1,134.9h.9 M93.7,128.0h.9 M100.3,138.6h.9 M106.6,117.7h.9 M112.8,72.7h.9 M95.5,113.0h.9 M110.9,134.8h.9 M119.2,56.3h.9 M119.1,51.3h.9 M104.1,152.3h.9 M117.4,67.7h.9 M116.0,92.5h.9 M108.7,66.4h.9 M105.3,105.4h.9 M110.5,74.4h.9 M116.1,65.2h.9 M91.9,152.5h.9 M96.8,133.5h.9 M103.0,93.6h.9 M124.7,66.4h.9 M98.3,149.4h.9 M101.1,134.9h.9 M100.0,116.5h.9 M99.4,130.4h.9 M97.4,148.7h.9 M108.1,69.0h.9 M98.4,84.6h.9 M110.6,94.4h.9 M96.4,113.2h.9 M106.9,82.7h.9 M100.0,131.0h.9 M100.6,137.7h.9 M101.0,146.0h.9 M109.0,131.0h.9 M101.3,144.5h.9 M114.9,48.9h.9 M110.1,120.2h.9 M100.7,73.8h.9 M116.3,70.6h.9 M100.6,97.0h.9 M107.9,100.3h.9 M99.6,133.7h.9 M120.5,46.6h.9 M104.6,149.7h.9 M115.8,79.4h.9 M107.4,143.0h.9 M107.8,92.4h.9 M101.2,71.7h.9 M99.0,140.1h.9 M111.0,59.4h.9 M107.4,81.9h.9 M99.4,121.2h.9 M97.6,94.7h.9 M99.1,97.9h.9 M119.0,85.1h.9 M101.1,99.8h.9 M105.1,110.8h.9 M114.0,61.8h.9 M97.7,97.8h.9 M128.4,53.5h.9 M96.9,122.5h.9 M97.3,80.7h.9 M92.0,100.1h.9 M124.9,58.4h.9 M98.7,83.6h.9 M104.8,101.2h.9 M110.3,76.1h.9 M107.3,110.6h.9 M102.2,123.0h.9 M117.2,73.8h.9 M116.6,80.2h.9 M100.1,74.7h.9 M131.5,37.8h.9 M115.8,72.9h.9 M103.6,111.4h.9 M100.0,71.5h.9 M90.0,134.6h.9 M101.2,121.8h.9 M105.3,128.3h.9 M101.5,150.1h.9 M120.6,73.2h.9 M114.1,72.2h.9 M125.2,50.9h.9 M98.2,81.7h.9 M104.1,82.4h.9 M108.5,83.3h.9 M103.9,146.3h.9 M103.9,111.0h.9 M109.8,95.6h.9 M99.3,106.7h.9 M125.7,61.0h.9 M120.9,54.1h.9 M99.4,149.6h.9 M118.4,78.8h.9 M98.3,98.3h.9 M113.3,61.6h.9 M116.2,76.0h.9 M107.8,151.3h.9 M94.5,117.1h.9 M96.2,104.9h.9 M105.8,123.6h.9 M102.2,109.5h.9 M96.3,129.1h.9 M99.5,152.3h.9 M104.8,107.6h.9 M122.6,64.4h.9 M96.7,102.7h.9 M95.0,105.5h.9 M95.2,75.5h.9 M92.5,123.9h.9 M107.3,132.3h.9 M109.2,146.3h.9 M119.1,54.0h.9 M93.7,130.2h.9 M108.3,129.1h.9 M104.4,145.0h.9 M110.7,83.0h.9 M97.2,119.3h.9 M129.3,43.4h.9 M109.2,68.9h.9 M104.3,71.9h.9 M103.5,98.2h.9 M108.7,115.6h.9 M116.1,65.7h.9 M97.1,105.3h.9 M103.1,79.7h.9 M100.7,75.7h.9 M112.9,77.8h.9 M94.7,110.0h.9 M104.6,79.4h.9 M104.1,124.5h.9 M123.7,45.7h.9 M114.7,90.0h.9 M99.2,147.7h.9 M113.7,82.6h.9 M97.8,123.0h.9 M104.8,65.4h.9 M101.4,113.5h.9 M97.2,144.9h.9 M114.2,62.1h.9 M113.5,66.8h.9 M95.8,147.3h.9 M102.6,133.7h.9 M106.6,71.2h.9 M98.0,79.3h.9 M104.8,127.2h.9 M98.6,116.8h.9 M97.2,95.1h.9 M100.8,101.8h.9 M97.0,107.6h.9 M105.5,128.7h.9 M105.1,144.3h.9 M101.1,102.6h.9 M102.7,143.7h.9 M100.1,120.0h.9 M98.5,123.6h.9 M101.2,109.6h.9 M103.4,108.4h.9 M105.9,108.3h.9 M95.9,133.4h.9 M112.7,63.5h.9 M96.8,107.3h.9 M99.1,135.3h.9 M105.9,114.6h.9 M96.1,136.7h.9 M102.8,126.6h.9 M107.6,80.0h.9 M106.7,152.1h.9 M121.6,59.6h.9 M102.4,134.4h.9 M101.2,69.0h.9 M113.0,66.5h.9 M89.1,113.3h.9 M106.6,140.5h.9 M100.5,117.7h.9 M108.3,76.7h.9 M94.6,104.5h.9 M114.1,65.3h.9 M90.5,113.9h.9 M116.9,79.3h.9 M107.2,78.9h.9 M101.6,87.4h.9 M121.2,69.5h.9 M108.4,99.4h.9 M106.3,135.1h.9 M103.4,85.7h.9 M95.2,120.3h.9 M113.5,74.4h.9 M97.1,99.6h.9 M108.3,85.5h.9 M97.3,139.2h.9 M107.8,119.7h.9 M105.2,84.0h.9 M102.5,122.1h.9 M122.1,46.1h.9 M100.5,107.3h.9 M107.9,95.5h.9 M120.6,61.3h.9 M94.7,113.8h.9 M98.6,93.0h.9 M105.1,76.0h.9 M105.3,87.1h.9 M121.7,60.8h.9 M95.3,120.8h.9 M98.3,92.9h.9 M111.6,90.0h.9 M84.5,122.2h.9 M103.5,136.8h.9 M95.9,119.5h.9 M102.3,144.6h.9 M96.7,136.1h.9 M110.2,65.2h.9 M122.2,55.5h.9 M103.8,70.4h.9 M115.2,65.3h.9 M110.0,79.5h.9 M93.8,147.2h.9 M120.5,56.8h.9 M115.5,75.9h.9 M129.2,49.3h.9 M124.7,50.1h.9 M95.5,134.0h.9 M103.7,117.9h.9 M115.7,75.0h.9 M126.1,58.0h.9 M99.4,131.5h.9 M94.5,118.7h.9 M101.5,118.3h.9 M108.1,143.9h.9 M102.7,112.7h.9 M101.4,127.4h.9 M105.0,106.2h.9 M101.1,134.4h.9 M100.1,95.2h.9 M117.2,81.5h.9 M121.3,53.2h.9 M109.1,64.7h.9 M111.2,73.5h.9 M110.2,73.6h.9 M92.4,149.3h.9 M103.0,101.7h.9 M103.0,149.7h.9 M118.0,80.5h.9 M108.2,143.4h.9 M92.9,139.7h.9 M104.4,92.5h.9 M126.5,56.8h.9 M97.0,128.5h.9 M102.8,102.3h.9 M103.5,137.6h.9 M110.6,78.8h.9 M116.5,82.9h.9 M105.8,116.0h.9 M104.2,102.3h.9 M106.2,100.3h.9 M107.0,104.6h.9 M103.2,126.3h.9 M104.8,140.2h.9 M103.5,99.0h.9 M117.4,65.1h.9 M125.3,55.4h.9 M96.1,92.2h.9 M100.7,104.1h.9 M119.9,58.5h.9 M105.5,146.8h.9 M122.6,47.8h.9 M118.1,85.5h.9 M98.0,94.5h.9 M102.7,125.7h.9 M118.2,71.1h.9 M98.7,149.6h.9 M91.9,112.2h.9 M103.0,142.6h.9 M107.5,99.8h.9 M101.2,94.4h.9 M111.8,73.4h.9 M111.1,109.8h.9 M101.4,133.0h.9 M118.8,65.8h.9 M91.4,149.5h.9 M105.7,139.5h.9 M105.8,86.9h.9 M96.2,139.5h.9 M107.5,62.8h.9 M103.1,106.3h.9 M114.8,70.9h.9 M111.3,115.5h.9 M107.8,89.0h.9 M121.2,54.9h.9 M100.3,128.4h.9 M109.9,72.2h.9 M102.5,86.0h.9 M90.9,117.9h.9 M92.8,96.8h.9 M103.4,152.4h.9 M115.3,73.8h.9 M99.6,140.1h.9 M107.7,120.1h.9 M100.4,101.6h.9 M106.2,142.2h.9 M101.4,126.3h.9 M106.7,96.1h.9 M112.0,68.7h.9 M102.6,87.1h.9 M124.0,48.2h.9 M103.8,139.3h.9 M105.5,114.5h.9 M93.3,88.3h.9 M109.9,78.8h.9 M116.9,69.3h.9 M101.6,149.5h.9 M95.0,103.9h.9 M110.2,116.9h.9 M100.9,101.1h.9 M101.3,132.3h.9 M99.8,128.9h.9 M93.2,150.2h.9 M115.9,80.4h.9 M98.9,150.7h.9 M107.7,82.5h.9 M103.2,69.6h.9 M105.4,76.6h.9 M105.5,103.6h.9 M92.3,143.5h.9 M97.6,107.8h.9 M128.2,53.2h.9 M117.9,59.4h.9 M91.9,120.8h.9 M93.0,98.4h.9 M95.7,91.0h.9 M109.0,149.9h.9 M102.6,90.6h.9 M113.4,86.0h.9 M104.0,106.8h.9 M94.2,131.0h.9 M124.3,47.3h.9 M101.4,88.8h.9 M110.3,124.8h.9 M98.7,101.4h.9 M126.3,52.7h.9 M110.4,73.5h.9 M103.4,150.2h.9 M92.1,142.0h.9 M110.6,105.7h.9 M106.6,72.5h.9 M107.9,64.1h.9 M105.9,95.3h.9 M105.9,129.0h.9 M99.4,99.4h.9 M104.2,127.6h.9 M113.8,66.2h.9 M109.9,118.7h.9 M99.5,121.6h.9 M114.2,63.7h.9 M125.6,63.7h.9 M124.5,64.3h.9 M122.4,73.4h.9 M99.3,137.3h.9 M99.6,134.4h.9 M95.6,100.7h.9 M108.8,128.2h.9 M98.6,137.6h.9 M98.8,138.1h.9 M106.0,130.2h.9 M116.2,69.8h.9 M92.1,113.7h.9 M101.7,135.2h.9 M98.3,122.7h.9 M109.3,65.2h.9 M102.5,76.6h.9 M105.8,128.5h.9 M98.4,123.8h.9 M98.8,138.1h.9 M92.0,81.7h.9 M103.2,118.3h.9 M124.4,51.0h.9 M101.5,141.6h.9 M116.8,51.9h.9 M95.6,113.1h.9 M118.0,64.9h.9 M111.3,97.7h.9 M98.4,118.0h.9 M103.9,130.9h.9 M107.0,122.0h.9 M89.6,145.9h.9 M106.0,101.1h.9 M87.6,88.4h.9 M112.8,74.2h.9 M96.8,107.3h.9 M103.5,73.0h.9 M96.1,149.5h.9 M108.0,68.2h.9 M102.1,145.7h.9 M100.8,112.8h.9 M105.3,88.4h.9 M107.9,63.7h.9 M96.3,149.5h.9 M98.2,97.3h.9 M96.8,129.6h.9 M105.4,78.3h.9 M98.7,127.4h.9 M95.4,145.4h.9 M96.1,119.7h.9 M105.7,85.4h.9 M95.9,147.3h.9 M94.0,104.3h.9 M103.7,138.8h.9 M104.8,84.0h.9 M93.9,109.7h.9 M94.6,126.8h.9 M120.8,51.2h.9 M98.1,107.8h.9 M106.3,74.3h.9 M108.3,92.4h.9 M117.3,75.6h.9 M104.8,95.9h.9 M104.6,143.3h.9 M107.3,86.2h.9 M105.0,71.2h.9 M103.7,79.0h.9 M108.2,88.4h.9 M111.5,101.3h.9 M108.4,113.4h.9 M91.0,125.7h.9 M95.8,138.6h.9 M105.6,149.7h.9 M111.5,101.1h.9 M93.7,118.9h.9 M95.7,107.1h.9 M111.6,64.8h.9 M106.1,89.7h.9 M85.4,98.7h.9 M87.2,109.7h.9 M124.3,66.5h.9 M104.8,97.3h.9 M105.0,124.7h.9 M103.5,128.5h.9 M113.9,86.9h.9 M97.2,101.1h.9 M89.0,116.3h.9 M112.2,91.2h.9 M97.7,149.0h.9 M100.4,99.0h.9 M100.4,104.9h.9 M106.2,123.4h.9 M97.2,146.0h.9 M100.7,85.4h.9 M119.5,56.2h.9 M101.6,85.3h.9 M99.1,139.0h.9 M97.3,123.2h.9 M97.2,111.4h.9 M106.4,111.2h.9 M101.2,88.4h.9 M95.3,113.9h.9 M103.4,81.3h.9 M101.0,137.9h.9 M106.4,77.5h.9 M109.2,74.8h.9 M99.2,145.6h.9 M121.9,60.6h.9 M104.6,73.9h.9 M113.1,67.0h.9 M104.0,83.1h.9 M105.1,125.6h.9 M97.1,82.5h.9 M112.1,99.9h.9 M96.0,126.9h.9 M101.0,77.3h.9 M95.7,105.1h.9 M98.0,123.6h.9 M122.5,51.9h.9 M123.9,60.6h.9 M106.5,105.6h.9 M105.7,132.0h.9 M101.0,105.6h.9 M118.6,69.6h.9 M100.1,93.9h.9 M106.5,139.0h.9 M93.2,120.2h.9 M101.5,94.5h.9 M105.2,70.7h.9 M112.9,96.1h.9 M101.4,128.8h.9 M112.3,97.8h.9 M100.3,140.8h.9 M112.6,52.4h.9 M126.7,51.9h.9 M94.1,100.1h.9 M119.2,79.1h.9 M117.2,88.2h.9 M92.8,120.2h.9 M108.3,126.2h.9 M112.6,73.2h.9 M115.7,66.6h.9 M102.2,67.9h.9 M96.9,118.3h.9 M101.8,98.2h.9 M104.5,142.0h.9 M108.1,114.2h.9 M89.4,134.7h.9 M98.3,98.6h.9 M106.6,110.4h.9 M90.9,108.0h.9 M98.9,148.4h.9 M121.1,50.1h.9 M128.4,45.9h.9 M101.9,90.2h.9 M109.5,147.3h.9 M97.3,125.5h.9 M109.5,131.5h.9 M115.5,67.4h.9 M98.4,134.6h.9 M113.7,64.1h.9 M91.9,143.1h.9 M122.8,52.4h.9 M97.0,93.0h.9 M103.0,133.7h.9 M120.5,56.4h.9 M103.7,140.3h.9 M97.1,112.0h.9 M100.2,121.6h.9 M121.4,72.2h.9 M99.4,143.7h.9 M100.8,101.7h.9 M99.3,131.1h.9 M105.7,102.3h.9 M111.0,74.8h.9 M103.7,100.1h.9 M117.6,76.7h.9 M100.6,146.5h.9 M121.4,54.9h.9 M94.1,135.5h.9 M100.8,120.1h.9 M110.2,71.9h.9 M102.0,74.4h.9 M110.3,128.6h.9 M85.5,131.0h.9 M117.2,67.8h.9 M95.1,145.0h.9 M118.2,63.0h.9 M120.5,63.9h.9 M110.1,70.7h.9 M99.2,103.0h.9 M99.7,151.8h.9 M113.6,63.2h.9 M121.6,65.3h.9 M100.8,147.9h.9 M110.2,80.4h.9 M111.2,98.7h.9 M99.2,100.0h.9 M100.0,144.0h.9 M102.6,83.0h.9 M124.4,57.2h.9 M123.2,48.7h.9 M109.6,81.2h.9 M103.0,118.4h.9 M107.4,135.9h.9 M105.9,143.0h.9 M107.8,112.1h.9 M104.0,131.9h.9 M101.5,131.3h.9 M121.3,54.1h.9 M117.8,61.3h.9 M105.6,152.4h.9 M93.5,122.3h.9 M111.9,77.0h.9 M127.3,46.1h.9 M87.9,134.5h.9 M113.4,56.2h.9 M119.8,70.7h.9 M114.0,75.5h.9 M101.6,135.9h.9 M95.5,117.7h.9 M101.1,143.9h.9 M91.0,122.2h.9 M85.7,113.0h.9 M104.6,73.9h.9 M120.0,77.7h.9 M118.8,64.5h.9 M127.9,53.7h.9 M110.3,134.5h.9 M123.2,65.5h.9 M100.1,105.2h.9 M107.6,90.1h.9 M121.7,57.5h.9 M102.5,128.6h.9 M98.7,85.0h.9 M126.1,45.5h.9 M95.7,103.9h.9 M107.9,66.7h.9 M99.9,144.7h.9 M94.5,104.4h.9 M100.0,83.4h.9 M101.5,145.1h.9 M123.4,69.5h.9 M114.3,77.5h.9 M89.3,95.5h.9 M104.3,108.4h.9 M102.1,87.7h.9 M107.7,112.3h.9 M103.4,133.4h.9 M96.1,114.6h.9 M117.0,72.3h.9 M124.7,44.1h.9 M101.6,135.8h.9 M103.9,93.9h.9 M97.7,118.2h.9 M96.9,145.3h.9 M112.4,65.5h.9 M117.9,75.0h.9 M108.2,87.9h.9 M110.6,76.9h.9 M110.1,114.2h.9 M119.8,45.0h.9 M117.7,66.0h.9 M91.1,129.7h.9 M115.7,70.6h.9 M99.9,124.4h.9 M107.2,138.1h.9 M96.3,100.2h.9 M113.2,90.5h.9 M107.0,79.3h.9 M106.5,89.3h.9 M107.4,105.2h.9 M90.2,96.3h.9 M115.3,75.5h.9 M129.6,49.0h.9 M101.4,129.0h.9 M91.6,121.7h.9 M103.1,139.4h.9 M96.9,152.4h.9 M95.8,106.0h.9 M102.4,90.7h.9 M104.6,60.6h.9 M91.7,101.7h.9 M106.3,89.0h.9 M104.9,102.8h.9 M118.5,66.2h.9 M100.1,138.4h.9 M124.3,42.9h.9 M106.4,87.0h.9 M100.7,83.1h.9 M111.6,107.1h.9 M110.0,148.1h.9 M119.2,67.5h.9 M109.7,137.0h.9 M112.1,79.3h.9 M113.9,71.3h.9 M121.7,55.9h.9 M112.8,72.1h.9 M104.7,96.9h.9 M105.3,108.1h.9 M106.2,99.6h.9 M101.2,126.7h.9 M93.8,135.5h.9 M96.7,129.1h.9 M95.5,118.5h.9 M103.8,127.5h.9 M99.4,144.1h.9 M107.4,65.3h.9 M117.1,64.5h.9 M94.0,133.2h.9 M104.3,99.8h.9 M111.8,78.7h.9 M97.4,150.8h.9 M95.3,121.7h.9 M113.5,94.0h.9 M110.5,84.5h.9 M108.0,130.1h.9 M99.0,81.7h.9 M100.1,102.4h.9 M101.4,152.5h.9 M101.5,111.6h.9 M112.8,65.6h.9 M98.5,152.4h.9 M127.0,37.1h.9 M98.5,100.1h.9 M111.4,113.8h.9 M100.0,110.0h.9 M107.4,88.5h.9 M92.1,120.7h.9 M102.2,136.8h.9 M104.9,91.7h.9 M105.3,112.6h.9 M99.2,146.5h.9 M122.6,56.5h.9 M104.9,112.8h.9 M106.9,83.5h.9 M110.9,134.3h.9 M110.6,105.4h.9 M106.5,141.4h.9 M105.8,70.6h.9 M98.1,80.3h.9 M115.2,80.6h.9 M108.3,149.2h.9 M112.3,65.7h.9 M101.0,85.5h.9 M112.2,81.2h.9 M98.0,121.9h.9 M94.2,152.5h.9 M102.8,122.6h.9 M101.8,85.5h.9 M124.3,45.5h.9 M100.5,112.6h.9 M104.6,126.8h.9 M102.8,147.9h.9 M94.9,114.6h.9 M109.6,89.4h.9 M116.8,72.1h.9 M98.6,131.8h.9 M127.4,40.3h.9 M108.6,130.7h.9 M104.4,98.6h.9 M94.9,147.3h.9 M109.6,80.2h.9 M100.5,104.7h.9 M100.6,151.3h.9 M121.5,71.7h.9 M112.1,82.6h.9 M122.5,54.1h.9 M124.1,44.5h.9 M108.7,143.6h.9 M129.8,39.0h.9 M111.6,101.5h.9 M101.8,146.2h.9 M121.9,71.5h.9 M103.9,88.3h.9 M115.0,90.0h.9 M118.7,65.6h.9 M96.6,143.7h.9 M106.8,151.3h.9 M99.2,133.9h.9 M98.7,113.9h.9 M110.2,116.5h.9 M99.5,108.0h.9 M108.8,144.2h.9 M93.9,138.7h.9 M113.7,87.6h.9 M110.5,116.7h.9 M115.2,86.1h.9 M99.9,99.8h.9 M107.1,84.2h.9 M107.3,120.4h.9 M104.3,75.5h.9 M104.3,145.4h.9 M119.2,65.0h.9 M98.9,89.7h.9 M109.6,80.3h.9 M106.1,107.9h.9 M107.2,93.3h.9 M109.6,70.7h.9 M95.5,135.6h.9 M100.6,126.5h.9 M111.7,72.4h.9 M97.0,93.8h.9 M99.7,121.7h.9 M116.9,80.7h.9 M110.5,105.4h.9 M103.2,132.5h.9 M96.0,95.3h.9 M105.8,111.0h.9 M111.0,65.0h.9 M113.2,65.3h.9 M102.4,143.5h.9 M106.5,68.4h.9 M106.5,112.5h.9 M120.7,65.5h.9 M109.7,66.4h.9 M98.3,81.6h.9 M99.9,123.6h.9 M103.7,105.2h.9 M109.8,121.0h.9 M100.2,119.4h.9 M115.5,90.6h.9 M109.9,76.7h.9 M104.0,136.4h.9 M113.7,68.2h.9 M108.3,68.4h.9 M107.6,82.2h.9 M93.6,89.6h.9 M98.2,142.8h.9 M92.1,99.1h.9 M102.3,103.2h.9 M97.6,114.9h.9 M115.5,86.8h.9 M104.1,90.5h.9 M99.0,102.9h.9 M102.1,95.5h.9 M103.7,98.1h.9 M100.5,106.4h.9 M104.7,98.9h.9 M112.6,86.4h.9 M128.6,43.9h.9 M101.1,134.9h.9 M105.5,99.4h.9 M123.7,64.7h.9 M99.4,88.0h.9 M116.5,50.5h.9 M105.2,82.8h.9 M106.1,136.0h.9 M108.8,140.7h.9 M93.6,116.7h.9 M106.1,131.7h.9 M100.7,113.7h.9 M97.6,147.8h.9 M108.3,91.4h.9 M89.0,108.4h.9 M102.7,152.0h.9 M100.4,94.5h.9 M99.7,132.6h.9 M111.1,64.0h.9 M114.8,64.1h.9 M116.6,63.9h.9 M107.5,80.6h.9 M99.0,136.3h.9 M116.6,65.1h.9 M99.0,126.4h.9 M100.0,108.9h.9 M105.6,70.3h.9 M115.8,51.1h.9 M116.5,65.8h.9 M108.6,138.7h.9 M96.1,107.7h.9 M116.7,72.8h.9 M94.1,72.8h.9 M95.3,124.9h.9 M109.7,127.3h.9 M109.5,65.0h.9 M100.3,147.4h.9 M109.5,152.1h.9 M101.9,132.0h.9 M96.4,123.4h.9 M114.9,61.8h.9 M101.1,138.6h.9 M115.3,70.6h.9 M104.5,90.8h.9 M110.9,77.3h.9 M101.4,112.5h.9 M95.5,149.7h.9 M105.2,72.8h.9 M104.7,112.6h.9 M91.2,111.9h.9 M97.3,117.5h.9 M109.6,66.9h.9 M115.0,72.6h.9 M103.7,137.1h.9 M122.7,45.4h.9 M100.5,151.9h.9 M104.6,91.2h.9 M106.5,118.0h.9 M102.8,104.3h.9 M93.5,117.1h.9 M97.9,145.0h.9 M115.9,78.9h.9 M109.7,85.0h.9 M105.5,130.6h.9 M100.4,149.1h.9 M120.1,55.6h.9 M121.2,69.2h.9 M92.2,128.6h.9 M98.7,149.6h.9 M122.5,65.4h.9 M114.9,70.2h.9 M104.4,65.6h.9 M121.7,62.7h.9 M115.0,67.5h.9 M100.2,106.4h.9 M90.9,111.7h.9 M93.5,101.7h.9 M101.5,128.0h.9 M104.3,121.5h.9 M109.9,68.1h.9 M119.8,79.0h.9 M112.4,87.6h.9 M106.4,105.2h.9 M124.0,59.5h.9 M105.5,70.0h.9 M112.8,76.5h.9 M96.8,96.1h.9 M103.1,121.0h.9 M131.5,39.7h.9 M111.0,68.6h.9 M102.1,92.8h.9 M96.4,148.5h.9 M97.0,93.5h.9 M117.0,61.4h.9 M112.3,89.0h.9 M112.8,66.3h.9 M101.1,134.0h.9 M97.2,138.8h.9 M97.6,104.0h.9 M110.7,74.3h.9 M116.1,72.2h.9 M108.3,90.3h.9 M123.1,56.6h.9 M102.2,149.0h.9 M95.7,120.0h.9 M113.5,83.0h.9 M112.4,72.0h.9 M108.9,100.1h.9 M112.7,95.0h.9 M95.3,81.7h.9 M94.7,133.8h.9 M99.6,81.5h.9 M96.4,116.6h.9 M110.4,83.5h.9 M101.0,126.8h.9 M118.9,72.8h.9 M100.3,72.2h.9 M95.4,113.8h.9 M102.0,81.8h.9 M97.9,81.3h.9 M114.5,74.5h.9 M102.0,117.3h.9 M112.0,88.7h.9 M115.7,84.2h.9 M89.2,127.8h.9 M123.1,66.7h.9 M108.4,89.4h.9 M98.1,146.5h.9 M114.7,66.1h.9 M116.2,55.6h.9 M101.7,150.0h.9 M103.4,141.8h.9 M107.4,110.9h.9 M106.1,150.7h.9 M96.2,106.5h.9 M102.7,116.5h.9 M122.8,62.8h.9 M117.1,75.7h.9 M111.4,59.6h.9 M104.0,146.3h.9 M103.9,134.6h.9 M112.2,78.3h.9 M104.7,86.2h.9 M94.9,135.3h.9 M90.9,141.8h.9 M98.7,97.0h.9 M108.2,143.0h.9 M101.7,143.5h.9 M108.4,128.0h.9 M111.1,126.4h.9 M102.4,113.2h.9 M106.5,76.3h.9 M120.6,48.0h.9 M104.0,121.2h.9 M116.7,57.3h.9 M97.6,138.4h.9 M95.3,107.3h.9 M113.8,71.1h.9 M103.9,99.5h.9 M123.4,67.7h.9 M114.0,72.1h.9 M93.8,123.5h.9 M106.7,137.7h.9 M93.7,149.4h.9 M97.2,99.2h.9 M110.8,77.7h.9 M111.1,84.5h.9 M94.4,142.6h.9 M102.7,106.9h.9 M101.6,129.0h.9 M117.0,81.7h.9 M110.6,75.1h.9 M98.4,139.2h.9 M99.9,119.8h.9 M102.4,129.2h.9 M99.6,144.4h.9 M112.7,71.5h.9 M105.5,93.8h.9 M96.7,128.9h.9 M99.1,96.5h.9 M99.3,148.1h.9 M115.6,77.2h.9 M110.1,111.4h.9 M113.1,61.9h.9 M110.1,77.0h.9 M89.6,102.7h.9 M118.7,66.1h.9 M97.5,99.8h.9 M122.9,61.6h.9 M105.1,80.3h.9 M120.0,53.5h.9 M109.7,118.6h.9 M100.8,83.9h.9 M106.3,85.0h.9 M103.3,84.2h.9 M101.0,133.1h.9 M102.6,152.3h.9 M94.0,106.0h.9 M109.2,69.5h.9 M86.4,116.8h.9 M92.8,143.1h.9 M104.8,125.3h.9 M93.7,136.0h.9 M114.7,77.0h.9 M91.5,105.0h.9 M105.8,139.1h.9 M108.1,141.2h.9 M89.1,121.3h.9 M95.2,136.8h.9 M94.2,151.1h.9 M95.3,150.7h.9 M100.1,99.6h.9 M111.8,102.5h.9 M106.5,93.4h.9 M106.5,67.0h.9 M108.5,77.3h.9 M105.1,73.2h.9 M108.3,97.1h.9 M109.5,60.3h.9 M112.6,77.3h.9 M101.0,135.6h.9 M117.8,59.3h.9 M110.5,121.8h.9 M101.3,102.4h.9 M107.9,84.8h.9 M97.9,99.7h.9 M123.6,52.3h.9 M108.0,69.7h.9 M106.6,90.8h.9 M112.1,89.1h.9 M98.9,149.5h.9 M106.3,142.0h.9 M104.2,137.2h.9 M100.2,101.9h.9 M98.4,94.0h.9 M104.9,136.3h.9 M102.7,99.7h.9 M113.2,65.6h.9 M98.9,130.6h.9 M104.4,149.7h.9 M116.1,72.0h.9 M94.8,120.4h.9 M126.3,41.8h.9 M111.1,110.3h.9 M98.6,145.9h.9 M99.4,148.8h.9 M97.6,126.8h.9 M98.0,102.0h.9 M108.1,97.0h.9 M112.9,95.4h.9 M122.4,49.4h.9 M124.3,46.3h.9 M103.4,88.9h.9 M96.6,146.3h.9 M110.1,56.3h.9 M101.9,92.0h.9 M99.3,116.6h.9 M107.4,88.2h.9 M108.1,96.5h.9 M117.2,75.6h.9 M93.1,91.4h.9 M110.5,90.6h.9 M124.4,49.3h.9 M96.8,100.5h.9 M95.7,106.9h.9 M111.0,74.4h.9 M97.2,110.8h.9 M101.0,132.9h.9 M104.7,145.8h.9 M98.7,119.7h.9 M105.4,70.7h.9 M101.5,104.1h.9 M96.7,89.8h.9 M87.0,101.1h.9 M114.1,72.8h.9 M100.5,71.7h.9 M106.0,137.4h.9 M107.7,84.8h.9 M98.4,92.0h.9 M107.0,93.2h.9 M94.4,142.4h.9 M110.0,98.3h.9 M109.4,68.8h.9 M94.3,103.3h.9 M94.6,137.1h.9 M98.5,128.3h.9 M99.1,117.3h.9 M101.1,96.9h.9 M116.0,82.4h.9 M101.2,83.4h.9 M106.3,93.7h.9 M90.3,119.6h.9 M103.3,139.6h.9 M110.2,75.1h.9 M100.3,119.2h.9 M111.9,109.0h.9 M96.0,92.2h.9 M104.8,148.5h.9 M112.5,88.2h.9 M101.1,111.0h.9 M102.8,127.1h.9 M103.2,141.4h.9 M96.1,116.4h.9 M104.0,94.1h.9 M125.1,56.0h.9 M110.8,139.3h.9 M108.5,108.9h.9 M108.6,68.5h.9 M100.6,149.8h.9 M98.7,150.7h.9 M101.7,93.4h.9 M104.4,101.7h.9 M103.4,140.6h.9 M110.1,61.5h.9 M120.4,50.6h.9 M108.5,151.6h.9 M99.4,105.5h.9 M101.6,143.1h.9 M123.2,62.3h.9 M100.9,126.8h.9 M97.7,138.2h.9 M101.0,146.5h.9 M95.2,92.7h.9 M114.3,64.6h.9 M102.6,137.2h.9 M92.3,152.3h.9 M114.1,75.2h.9 M107.4,81.6h.9 M99.6,118.8h.9 M116.6,48.2h.9 M120.9,73.9h.9 M109.8,138.5h.9 M126.7,37.9h.9 M117.4,62.0h.9 M101.3,127.4h.9 M123.8,65.8h.9 M104.4,116.4h.9 M103.2,111.9h.9 M111.9,97.7h.9 M96.5,143.8h.9 M99.5,145.4h.9 M111.1,79.2h.9 M107.3,78.0h.9 M111.0,72.8h.9 M102.4,126.5h.9 M116.0,68.4h.9 M102.6,103.9h.9 M103.5,84.6h.9 M105.0,136.3h.9 M102.8,100.5h.9 M104.4,132.8h.9 M95.8,112.7h.9 M114.6,70.7h.9 M106.8,79.1h.9 M97.0,85.5h.9 M120.0,62.3h.9 M106.5,86.2h.9 M110.1,147.4h.9 M107.1,136.8h.9 M106.3,93.4h.9 M91.1,125.7h.9 M101.2,79.4h.9 M108.0,124.6h.9 M90.8,125.1h.9 M104.9,111.9h.9 M99.1,146.2h.9 M108.8,82.2h.9 M117.2,64.9h.9 M104.4,106.1h.9 M96.4,105.9h.9 M117.5,60.6h.9 M115.1,65.4h.9 M106.7,126.2h.9 M98.8,143.4h.9 M107.2,133.5h.9 M105.4,142.7h.9 M103.4,87.2h.9 M98.1,112.2h.9 M97.4,149.0h.9 M107.0,83.3h.9 M103.3,116.0h.9 M121.3,45.1h.9 M114.2,66.6h.9 M101.0,103.4h.9 M96.3,135.3h.9 M105.4,137.4h.9 M119.7,66.5h.9 M102.7,94.2h.9 M101.2,70.5h.9 M101.1,138.7h.9 M115.0,80.8h.9 M103.8,75.6h.9 M116.3,68.5h.9 M110.7,61.8h.9 M114.0,67.4h.9 M100.7,151.1h.9 M101.3,111.5h.9 M114.6,63.1h.9 M94.8,130.8h.9 M96.9,134.8h.9 M95.6,142.0h.9 M96.4,98.6h.9 M106.4,71.7h.9 M105.9,151.2h.9 M122.7,72.7h.9 M106.5,130.1h.9 M116.3,80.2h.9 M106.7,151.9h.9 M98.9,89.9h.9 M106.2,128.1h.9 M110.9,81.2h.9 M112.1,53.4h.9 M117.2,86.3h.9 M111.8,86.9h.9 M111.0,103.2h.9 M108.0,106.3h.9 M113.1,92.8h.9 M95.9,143.1h.9 M99.7,126.6h.9 M97.6,108.0h.9 M102.6,97.8h.9 M102.2,110.4h.9 M110.6,69.6h.9 M112.2,74.4h.9 M106.5,133.0h.9 M111.8,66.9h.9 M110.2,66.8h.9 M100.4,91.5h.9 M107.8,128.2h.9 M114.9,62.7h.9 M118.6,52.1h.9 M95.7,127.5h.9 M107.8,73.6h.9 M117.4,50.6h.9 M107.1,114.9h.9 M122.6,66.8h.9 M108.0,145.5h.9 M96.4,123.1h.9 M120.2,65.0h.9 M109.7,152.9h.9 M114.8,57.1h.9 M109.5,78.3h.9 M108.7,84.7h.9 M127.4,52.3h.9 M111.2,65.2h.9 M105.7,137.1h.9 M102.6,143.9h.9 M118.4,82.2h.9 M99.1,147.0h.9 M110.1,95.6h.9 M110.2,89.1h.9 M105.8,100.3h.9 M109.2,74.8h.9 M127.6,44.8h.9 M107.0,95.1h.9 M104.6,84.7h.9 M104.8,72.6h.9 M104.9,126.6h.9 M110.2,82.4h.9 M110.5,65.3h.9 M103.4,104.9h.9 M105.8,77.0h.9 M100.8,97.4h.9 M127.8,52.4h.9 M93.7,138.8h.9 M102.7,109.3h.9 M107.2,95.8h.9 M94.5,134.0h.9 M108.6,149.9h.9 M122.0,75.8h.9 M109.9,145.4h.9 M124.8,43.1h.9 M128.8,43.1h.9 M100.7,143.6h.9 M115.9,71.0h.9 M118.0,81.5h.9 M103.4,142.0h.9 M93.6,151.3h.9 M107.5,73.0h.9 M103.9,141.4h.9 M96.2,87.4h.9 M106.1,148.9h.9 M101.9,140.0h.9 M113.4,87.1h.9 M114.4,78.4h.9 M111.2,69.0h.9 M124.4,48.1h.9 M105.1,144.9h.9 M101.2,84.8h.9 M98.3,149.5h.9 M102.3,152.6h.9 M111.5,66.9h.9 M111.0,86.7h.9 M127.2,46.0h.9 M104.2,98.5h.9 M112.8,76.5h.9 M96.3,114.5h.9 M93.3,84.4h.9 M107.9,119.9h.9 M95.2,111.8h.9 M97.0,98.8h.9 M100.9,141.6h.9 M103.1,100.1h.9 M99.6,118.7h.9 M107.1,123.0h.9 M115.4,71.5h.9 M109.4,78.6h.9 M109.4,84.7h.9 M123.0,45.7h.9 M120.6,69.1h.9 M102.3,129.2h.9 M99.1,98.9h.9 M100.1,138.5h.9 M94.9,121.3h.9 M106.5,117.0h.9 M99.4,141.1h.9 M105.5,149.7h.9 M99.7,133.3h.9 M100.6,98.4h.9 M99.3,93.6h.9 M93.1,105.7h.9 M126.1,46.1h.9 M107.6,80.7h.9 M96.9,104.9h.9 M108.0,76.8h.9 M98.2,137.8h.9 M109.0,95.4h.9 M108.5,139.7h.9 M109.4,88.1h.9 M110.1,133.3h.9 M118.9,57.4h.9 M100.3,105.9h.9 M103.2,72.2h.9 M111.1,126.4h.9 M103.9,67.7h.9 M101.8,118.9h.9 M108.5,79.1h.9 M106.8,152.8h.9 M105.2,95.3h.9 M99.9,127.6h.9 M125.4,48.3h.9 M102.8,149.0h.9 M116.7,71.5h.9 M108.1,127.3h.9 M96.7,108.5h.9 M98.3,145.3h.9 M105.7,92.3h.9 M97.2,82.1h.9 M102.4,79.4h.9 M116.1,62.6h.9 M101.9,146.5h.9 M108.5,143.8h.9 M101.6,128.9h.9 M107.3,71.1h.9 M122.0,50.5h.9 M101.2,93.7h.9 M105.0,94.6h.9 M105.6,83.4h.9 M101.6,107.3h.9 M112.7,66.1h.9 M121.1,46.5h.9 M97.6,91.2h.9 M114.2,65.3h.9 M109.9,64.6h.9 M103.7,83.8h.9 M102.7,82.7h.9 M100.0,109.0h.9 M93.0,140.1h.9 M104.2,82.7h.9 M104.8,84.2h.9 M91.6,117.7h.9 M107.5,88.8h.9 M99.7,100.7h.9 M105.2,87.2h.9 M122.8,71.2h.9 M108.1,121.5h.9 M116.5,88.4h.9 M104.3,94.8h.9 M114.3,56.4h.9 M107.8,142.0h.9 M110.5,100.0h.9 M107.8,97.7h.9 M105.4,100.6h.9 M104.3,138.4h.9 M103.6,151.0h.9 M103.0,111.4h.9 M115.5,77.8h.9 M99.2,96.2h.9 M109.0,85.3h.9 M96.3,119.9h.9 M111.6,97.2h.9 M111.4,109.0h.9 M98.8,86.6h.9 M100.1,137.7h.9 M122.2,61.9h.9 M114.2,64.3h.9 M99.6,152.5h.9 M115.5,61.4h.9 M100.2,126.0h.9 M107.0,129.4h.9 M104.7,95.1h.9 M123.6,47.4h.9 M94.1,88.9h.9 M105.6,90.7h.9 M108.4,76.1h.9 M106.2,85.7h.9 M122.0,46.6h.9 M105.6,99.2h.9 M109.4,75.9h.9 M109.0,84.6h.9 M123.0,51.5h.9 M107.3,144.1h.9 M103.0,115.2h.9 M98.6,120.5h.9 M98.0,125.8h.9 M111.2,109.7h.9 M102.1,79.1h.9 M110.6,100.4h.9 M97.4,119.5h.9 M101.6,112.6h.9 M106.3,140.7h.9 M109.0,75.7h.9 M102.0,139.7h.9 M106.9,89.5h.9 M122.9,65.1h.9 M110.7,91.0h.9 M96.3,108.8h.9 M110.8,90.8h.9 M113.4,66.4h.9 M109.2,96.2h.9 M113.9,64.4h.9 M103.2,93.4h.9 M99.1,120.7h.9 M109.6,145.6h.9 M111.0,67.5h.9 M109.5,131.3h.9 M119.5,78.7h.9 M95.0,98.8h.9 M115.1,59.0h.9 M95.0,90.1h.9 M102.7,79.8h.9 M101.5,104.5h.9 M114.2,72.8h.9 M97.4,141.5h.9 M97.8,148.7h.9 M103.9,121.7h.9 M114.4,70.4h.9 M102.6,98.5h.9 M99.6,110.7h.9 M96.8,78.3h.9 M104.0,99.9h.9 M108.0,88.9h.9 M119.5,80.4h.9 M97.8,86.2h.9 M111.3,105.7h.9 M102.2,92.9h.9 M107.5,108.5h.9 M109.8,110.0h.9 M99.3,76.7h.9 M110.5,98.0h.9 M108.6,115.6h.9 M102.9,123.5h.9 M98.4,115.5h.9 M93.0,96.8h.9 M98.2,98.6h.9 M104.3,137.3h.9 M95.7,146.9h.9 M101.0,118.0h.9 M103.7,152.3h.9 M88.5,110.3h.9 M106.0,94.8h.9 M123.3,58.2h.9 M102.3,134.8h.9 M102.4,148.2h.9 M93.8,110.6h.9 M98.3,91.1h.9 M111.7,63.9h.9 M96.3,92.9h.9 M108.7,65.5h.9 M99.9,142.8h.9 M123.8,45.8h.9 M120.3,70.3h.9 M101.1,107.0h.9 M97.0,106.0h.9 M99.8,135.6h.9 M115.5,80.3h.9 M99.2,148.0h.9 M117.2,59.1h.9 M100.6,90.8h.9 M121.6,59.6h.9 M97.5,148.5h.9 M101.6,149.1h.9 M103.9,106.0h.9 M103.4,129.9h.9 M119.1,47.9h.9 M106.3,89.0h.9 M114.0,65.2h.9 M111.0,79.4h.9 M111.1,107.6h.9 M96.5,138.8h.9 M98.4,113.7h.9 M97.9,123.0h.9 M97.5,142.0h.9 M98.2,109.2h.9 M103.7,86.4h.9 M91.0,129.5h.9 M115.2,64.7h.9 M101.2,142.0h.9 M106.2,104.3h.9 M99.1,148.2h.9 M99.6,141.6h.9 M107.3,148.3h.9 M99.4,128.3h.9 M98.7,96.7h.9 M106.0,130.5h.9 M106.5,80.2h.9 M115.2,62.7h.9 M96.2,121.4h.9 M99.7,68.4h.9 M103.0,103.1h.9 M100.9,129.1h.9 M107.5,76.1h.9 M112.0,65.3h.9 M102.2,88.1h.9 M95.1,98.2h.9 M97.9,111.0h.9 M101.6,102.7h.9 M108.5,141.9h.9 M107.6,106.1h.9 M102.1,112.7h.9 M103.1,141.7h.9 M101.9,95.2h.9 M106.8,75.6h.9 M112.4,61.8h.9 M98.9,127.4h.9 M110.6,66.1h.9 M100.7,131.5h.9 M105.0,63.4h.9 M107.9,113.3h.9 M109.6,152.9h.9 M130.5,42.7h.9 M105.9,70.5h.9 M99.1,115.0h.9 M108.1,121.5h.9 M98.8,77.6h.9 M108.2,142.9h.9 M106.3,128.9h.9 M112.8,75.3h.9 M104.3,93.8h.9 M99.6,109.4h.9 M104.6,143.4h.9 M102.2,82.4h.9 M103.6,100.9h.9 M98.6,143.6h.9 M104.9,136.5h.9 M105.5,73.2h.9 M120.9,58.9h.9 M107.9,122.1h.9 M98.9,105.6h.9 M106.9,113.8h.9 M103.1,78.2h.9 M105.2,133.7h.9 M99.7,134.3h.9 M95.2,98.1h.9 M117.0,78.2h.9 M99.4,128.7h.9 M103.0,75.4h.9 M99.4,95.3h.9 M113.9,66.2h.9 M99.9,132.7h.9 M89.3,112.4h.9 M98.2,84.5h.9 M109.8,124.9h.9 M126.6,50.5h.9 M98.4,101.7h.9 M108.5,136.4h.9 M106.1,114.4h.9 M86.6,122.5h.9 M112.1,84.4h.9 M125.8,43.6h.9 M95.1,135.1h.9 M95.5,126.3h.9 M114.9,61.0h.9 M111.0,73.6h.9 M118.8,67.9h.9 M102.0,100.3h.9 M102.4,88.4h.9 M92.0,105.7h.9 M98.3,126.9h.9 M106.7,94.7h.9 M96.5,116.7h.9 M103.8,107.9h.9 M89.7,111.3h.9 M96.9,137.1h.9 M113.4,75.0h.9 M111.3,119.6h.9 M96.0,131.9h.9 M106.9,150.6h.9 M97.8,143.6h.9 M115.1,55.3h.9 M114.2,91.8h.9 M103.9,88.5h.9 M103.6,119.9h.9 M100.4,95.1h.9 M98.6,145.5h.9 M95.5,129.6h.9 M101.4,87.9h.9 M95.2,125.6h.9 M102.8,94.6h.9 M110.4,113.6h.9 M102.6,145.9h.9 M104.7,123.3h.9 M97.3,96.8h.9 M129.2,45.3h.9 M103.5,146.7h.9 M118.3,86.7h.9 M93.9,120.4h.9 M99.8,114.1h.9 M105.7,72.5h.9 M110.1,93.2h.9 M111.2,74.0h.9 M99.7,123.5h.9 M112.8,83.2h.9 M99.0,148.1h.9 M101.7,113.4h.9 M105.0,91.2h.9 M93.2,142.9h.9 M100.4,124.8h.9 M111.3,69.0h.9 M129.0,38.2h.9 M95.1,152.3h.9 M102.7,150.2h.9 M109.7,120.3h.9 M104.7,86.9h.9 M93.3,98.7h.9 M97.2,96.6h.9 M97.1,80.5h.9 M124.3,47.9h.9 M110.7,139.4h.9 M98.1,105.1h.9 M102.7,140.2h.9 M97.1,122.0h.9 M104.6,133.6h.9 M106.2,82.7h.9 M124.0,50.9h.9 M89.7,138.8h.9 M94.5,95.3h.9 M104.9,128.2h.9 M97.4,105.8h.9 M114.1,57.5h.9 M121.5,51.1h.9 M119.4,52.5h.9 M120.4,70.4h.9 M111.4,101.4h.9 M129.3,48.5h.9 M122.5,64.0h.9 M97.5,148.0h.9 M110.9,119.1h.9 M98.2,79.4h.9 M101.2,139.5h.9 M108.1,81.5h.9 M118.2,69.0h.9 M128.3,47.2h.9 M93.1,139.0h.9 M100.0,137.4h.9 M103.4,151.9h.9 M95.7,107.8h.9 M112.8,67.1h.9 M108.4,98.2h.9 M103.5,146.7h.9 M99.1,104.7h.9 M110.3,113.2h.9 M96.1,105.0h.9 M102.8,90.1h.9 M111.4,101.5h.9 M100.4,152.5h.9 M123.9,50.7h.9 M100.0,105.6h.9 M113.5,70.5h.9 M102.3,111.3h.9 M106.4,93.9h.9 M120.7,49.2h.9 M94.5,110.5h.9 M110.7,72.4h.9 M99.3,117.2h.9 M113.5,93.8h.9 M106.8,76.9h.9 M101.0,114.2h.9 M89.4,111.7h.9 M106.3,77.3h.9 M112.8,81.6h.9 M103.3,131.4h.9 M101.6,146.9h.9 M111.8,100.2h.9 M109.0,82.9h.9 M98.8,143.1h.9 M104.3,85.7h.9 M109.9,69.6h.9 M95.7,105.2h.9 M103.3,101.1h.9 M96.2,88.9h.9 M105.8,91.7h.9 M94.7,69.9h.9 M105.5,105.9h.9 M105.9,150.7h.9 M112.7,68.7h.9 M105.4,123.2h.9 M102.3,111.9h.9 M120.1,51.0h.9 M98.1,119.7h.9 M109.9,59.2h.9 M114.6,64.6h.9 M100.6,110.4h.9 M114.3,90.4h.9 M123.7,62.5h.9 M101.1,106.9h.9 M113.0,68.3h.9 M90.2,151.8h.9 M90.3,119.3h.9 M104.5,141.4h.9 M115.1,84.2h.9 M111.7,63.7h.9 M102.7,147.5h.9 M100.3,86.6h.9 M99.0,117.3h.9 M101.6,152.4h.9 M89.1,103.8h.9 M97.8,118.6h.9 M94.6,128.5h.9 M108.2,64.1h.9 M121.3,66.7h.9 M98.0,150.4h.9 M111.0,120.3h.9 M100.3,113.3h.9 M105.8,75.2h.9 M95.9,129.7h.9 M110.7,79.4h.9 M92.8,115.0h.9 M97.5,152.6h.9 M111.6,75.2h.9 M96.3,117.1h.9 M104.3,146.9h.9 M119.3,65.4h.9 M122.7,66.1h.9 M107.8,120.3h.9 M101.7,116.2h.9 M114.7,54.6h.9 M108.2,107.2h.9 M107.0,151.3h.9 M97.8,86.8h.9 M101.9,103.2h.9 M106.6,86.3h.9 M110.0,73.9h.9 M119.1,68.4h.9 M98.9,151.0h.9 M95.2,142.0h.9 M113.5,94.3h.9 M111.2,69.2h.9 M100.7,93.3h.9 M89.2,119.0h.9 M98.9,101.5h.9 M120.4,50.8h.9 M106.8,61.6h.9 M99.1,133.7h.9 M104.7,149.3h.9 M119.1,55.7h.9 M100.5,132.9h.9 M121.7,52.5h.9 M99.6,100.2h.9 M111.4,83.2h.9 M116.0,70.5h.9 M108.3,80.8h.9 M105.6,91.0h.9 M104.3,117.0h.9 M101.5,129.8h.9 M102.0,148.6h.9 M107.3,76.0h.9 M96.8,89.7h.9 M108.6,151.8h.9 M97.3,85.0h.9 M105.8,93.4h.9 M91.2,90.3h.9 M91.8,76.2h.9 M111.8,63.7h.9 M103.0,149.7h.9 M109.1,125.3h.9 M124.6,45.2h.9 M123.1,43.0h.9 M109.2,86.6h.9 M124.2,44.6h.9 M104.4,141.1h.9 M109.7,66.2h.9 M98.6,134.9h.9 M103.8,85.9h.9 M108.3,98.3h.9 M106.8,111.0h.9 M104.3,75.0h.9 M97.8,132.6h.9 M108.1,84.7h.9 M115.3,90.7h.9 M96.6,124.6h.9 M110.6,71.1h.9 M104.5,73.5h.9 M99.7,136.3h.9 M99.7,125.3h.9 M124.8,50.6h.9 M118.6,77.5h.9 M108.5,122.2h.9 M108.2,133.5h.9 M120.1,78.9h.9 M91.8,106.6h.9 M102.2,131.4h.9 M110.7,75.5h.9 M100.6,78.1h.9 M90.9,132.0h.9 M105.7,94.2h.9 M113.5,63.8h.9 M102.5,119.1h.9 M108.2,138.2h.9 M111.4,71.4h.9 M103.2,115.2h.9 M124.2,51.5h.9 M95.3,135.9h.9 M110.5,81.0h.9 M119.1,79.5h.9 M106.8,122.0h.9 M102.4,118.0h.9 M111.0,103.0h.9 M106.4,93.5h.9 M103.9,113.5h.9 M103.1,117.4h.9 M100.7,116.2h.9 M96.5,95.9h.9 M118.2,61.9h.9 M91.9,132.2h.9 M97.0,149.5h.9 M104.7,138.3h.9 M122.7,48.5h.9 M103.9,87.0h.9 M111.8,76.6h.9 M100.7,80.5h.9 M105.1,112.4h.9 M101.8,148.6h.9 M103.5,145.3h.9 M113.7,79.5h.9 M101.7,150.0h.9 M108.0,145.2h.9 M111.0,61.6h.9 M110.1,62.4h.9 M119.8,66.2h.9 M121.5,61.4h.9 M122.1,71.3h.9 M104.7,114.9h.9 M101.7,149.9h.9 M94.1,120.3h.9 M95.8,146.5h.9 M110.1,90.7h.9 M107.0,66.1h.9 M101.9,117.3h.9 M107.4,81.8h.9 M104.7,150.1h.9 M98.7,151.5h.9 M94.3,148.6h.9 M103.6,63.3h.9 M111.6,64.6h.9 M105.6,146.5h.9 M120.9,75.7h.9 M129.0,37.4h.9 M112.0,67.5h.9 M100.3,123.5h.9 M101.9,97.3h.9 M126.0,45.8h.9 M91.0,140.5h.9 M92.9,145.9h.9 M103.9,152.1h.9 M104.1,88.5h.9 M105.1,106.7h.9 M97.9,99.4h.9 M122.7,55.8h.9 M108.4,115.2h.9 M103.1,130.1h.9 M100.8,145.1h.9 M125.7,51.3h.9 M112.6,89.5h.9 M120.5,44.8h.9 M106.3,106.0h.9 M96.5,148.7h.9 M103.8,74.8h.9 M102.7,87.1h.9 M112.7,84.8h.9 M102.6,131.5h.9 M102.9,130.9h.9 M118.7,77.9h.9 M94.9,146.7h.9 M99.9,93.4h.9 M100.9,69.4h.9 M106.9,141.3h.9 M105.6,79.3h.9 M94.5,123.3h.9 M97.1,132.2h.9 M110.0,88.5h.9 M108.0,73.5h.9 M103.2,136.4h.9 M104.7,117.5h.9 M107.0,85.2h.9 M95.6,104.1h.9 M99.6,135.8h.9 M93.8,105.1h.9 M122.6,49.7h.9 M95.4,93.3h.9 M112.9,68.4h.9 M96.9,109.0h.9 M124.3,49.6h.9 M119.5,54.1h.9 M100.2,101.7h.9 M105.6,126.9h.9 M99.3,97.7h.9 M119.8,57.2h.9 M107.1,90.7h.9 M111.8,85.4h.9 M98.0,121.5h.9 M114.9,62.0h.9 M121.3,56.0h.9 M119.0,45.1h.9 M111.8,80.5h.9 M110.4,122.3h.9 M104.0,142.1h.9 M115.8,65.3h.9 M96.9,102.2h.9 M116.9,75.0h.9 M116.3,66.5h.9 M103.4,112.2h.9 M107.2,102.6h.9 M102.1,152.0h.9 M99.4,121.4h.9 M108.4,147.1h.9 M101.5,133.9h.9 M114.2,66.3h.9 M100.0,110.0h.9 M112.0,71.8h.9 M96.8,104.3h.9 M105.9,141.9h.9 M96.9,98.6h.9 M87.3,129.4h.9 M109.5,85.9h.9 M103.3,65.7h.9 M96.4,108.6h.9 M102.8,116.9h.9 M122.5,55.4h.9 M105.0,71.5h.9 M106.7,136.3h.9 M106.6,142.4h.9 M95.1,103.9h.9 M104.3,109.5h.9 M113.7,62.3h.9 M95.1,110.2h.9 M103.4,123.0h.9 M105.6,111.5h.9 M102.3,117.5h.9 M100.8,104.2h.9 M108.0,63.1h.9 M102.1,98.5h.9 M104.8,101.7h.9 M102.1,94.3h.9 M108.0,66.1h.9 M104.5,83.7h.9 M120.0,66.6h.9 M102.3,92.5h.9 M96.3,87.1h.9 M124.1,54.6h.9 M108.0,116.7h.9 M97.6,114.8h.9 M98.7,137.7h.9 M100.9,81.9h.9 M99.4,142.2h.9 M120.5,44.8h.9 M102.0,104.5h.9 M91.7,101.9h.9 M100.8,119.6h.9 M102.5,66.0h.9 M110.1,55.9h.9 M94.1,123.7h.9 M112.8,89.9h.9 M97.1,97.2h.9 M106.2,80.2h.9 M98.2,118.9h.9 M126.5,44.0h.9 M108.6,110.4h.9 M100.3,70.1h.9 M95.2,107.0h.9 M115.7,65.9h.9 M110.3,94.8h.9 M109.9,84.1h.9 M101.3,85.0h.9 M103.6,99.1h.9 M118.1,57.6h.9 M96.5,136.6h.9 M101.7,129.9h.9 M90.6,109.8h.9 M107.3,111.5h.9 M95.4,85.8h.9 M113.5,75.8h.9 M117.2,81.8h.9 M103.2,120.7h.9 M99.9,108.1h.9 M86.6,109.9h.9 M126.6,46.0h.9 M127.9,50.9h.9 M101.6,131.8h.9 M89.1,151.3h.9 M105.5,111.6h.9 M95.6,113.6h.9 M118.6,57.0h.9 M110.5,106.9h.9 M91.4,84.3h.9 M105.9,140.6h.9 M110.2,82.9h.9 M103.7,107.2h.9 M94.0,152.3h.9 M109.3,68.5h.9 M117.1,77.4h.9 M99.0,132.7h.9 M102.7,84.6h.9 M103.3,152.7h.9 M110.1,142.5h.9 M96.9,102.1h.9 M126.5,57.8h.9 M106.7,66.5h.9 M122.4,54.8h.9 M105.7,130.7h.9 M120.5,62.4h.9 M110.1,70.3h.9 M104.1,147.9h.9 M102.9,82.9h.9 M92.0,130.0h.9 M111.5,108.5h.9 M91.2,135.9h.9 M97.9,93.0h.9 M107.5,91.0h.9 M102.1,114.5h.9 M103.8,84.5h.9 M96.5,142.1h.9 M110.4,75.9h.9 M95.0,97.4h.9 M103.2,146.1h.9 M112.8,94.3h.9 M113.9,58.2h.9 M108.8,151.8h.9 M117.5,68.7h.9 M101.6,97.2h.9 M91.0,152.1h.9 M99.4,100.3h.9 M116.9,69.2h.9 M104.4,129.6h.9 M117.1,49.9h.9 M121.4,47.1h.9 M95.8,86.7h.9 M112.8,81.2h.9 M107.5,90.9h.9 M109.5,71.2h.9 M94.1,119.7h.9 M129.6,50.8h.9 M95.5,152.7h.9 M108.5,85.2h.9 M104.3,137.0h.9 M119.2,80.3h.9 M126.7,57.7h.9 M108.6,98.8h.9 M104.0,91.9h.9 M101.2,102.3h.9 M124.7,58.9h.9 M108.8,124.2h.9 M97.4,81.8h.9 M91.9,109.5h.9 M100.8,127.1h.9 M101.1,112.3h.9 M101.0,97.6h.9 M72.2,1.2h.9 M75.0,3.5h.9 M80.7,2.2h.9 M84.1,0.2h.9 M78.0,0.7h.9 M85.2,4.2h.9 M78.8,8.8h.9 M82.1,6.9h.9 M83.7,8.5h.9 M78.1,6.4h.9 M81.5,0.3h.9 M83.9,1.6h.9 M78.2,6.2h.9 M73.3,8.5h.9 M84.9,2.5h.9 M83.6,4.5h.9 M83.7,3.7h.9 M80.4,0.4h.9 M79.2,2.6h.9 M72.9,7.3h.9 M75.3,5.1h.9 M86.5,0.0h.9 M71.9,1.2h.9 M77.3,2.4h.9 M73.9,0.2h.9 M78.0,8.8h.9 M74.9,5.7h.9 M85.0,2.2h.9 M78.6,3.0h.9 M75.9,5.7h.9 M71.2,7.5h.9 M78.0,2.7h.9 M81.5,9.1h.9 M79.8,10.9h.9 M79.6,2.3h.9 M73.1,0.2h.9 M79.6,2.8h.9 M73.0,2.5h.9 M81.9,3.9h.9 M89.4,10.3h.9 M89.4,5.0h.9 M79.9,7.0h.9 M81.8,8.1h.9 M83.8,6.9h.9 M83.9,6.4h.9 M71.3,5.2h.9 M77.5,3.1h.9 M89.5,0.4h.9 M88.3,1.0h.9 M79.5,10.3h.9 M86.6,2.1h.9 M85.2,3.2h.9 M70.3,1.8h.9 M85.6,11.6h.9 M73.9,6.7h.9 M88.4,1.7h.9 M81.4,3.3h.9 M82.2,5.6h.9 M85.7,9.1h.9 M80.9,1.0h.9 M76.9,3.0h.9 M83.6,2.7h.9 M71.4,7.2h.9 M82.9,1.1h.9 M78.2,10.9h.9 M72.3,8.8h.9 M75.0,5.0h.9 M85.2,6.7h.9 M77.3,1.1h.9 M82.4,2.7h.9 M77.6,0.2h.9 M83.0,8.1h.9 M82.2,9.1h.9 M75.0,4.8h.9 M84.0,7.9h.9 M82.6,6.2h.9 M78.2,0.4h.9 M84.5,1.2h.9 M84.0,2.2h.9 M90.0,6.4h.9 M79.4,5.6h.9 M84.2,5.8h.9 M76.6,1.8h.9 M84.4,4.6h.9 M72.1,1.3h.9 M81.0,5.5h.9 M83.2,6.8h.9 M77.8,3.4h.9 M80.9,1.5h.9 M79.2,5.4h.9 M81.2,2.3h.9 M83.3,0.6h.9 M75.7,4.8h.9 M76.7,0.2h.9 M79.4,7.0h.9 M83.2,1.7h.9 M83.3,1.2h.9 M77.9,6.5h.9 M84.4,6.4h.9 M78.8,7.0h.9 M76.8,0.7h.9 M77.2,1.2h.9 M82.5,5.7h.9 M82.9,4.9h.9 M76.8,2.0h.9 M85.0,2.9h.9 M82.5,0.6h.9 M83.0,6.0h.9 M80.7,2.8h.9 M76.0,9.2h.9 M84.7,6.6h.9 M72.5,12.3h.9 M80.1,3.3h.9 M80.1,9.8h.9 M80.5,7.4h.9 M80.3,0.3h.9 M74.2,6.9h.9 M76.7,0.3h.9 M85.3,3.9h.9 M81.8,8.5h.9 M75.0,5.7h.9 M76.7,2.6h.9 M74.8,5.3h.9 M76.6,3.5h.9 M81.9,4.2h.9 M77.7,0.7h.9 M84.4,9.0h.9 M77.2,4.3h.9 M85.2,3.2h.9 M80.8,1.3h.9 M74.4,0.9h.9 M75.8,2.8h.9 M81.0,10.1h.9 M81.5,2.0h.9 M86.1,5.0h.9 M84.5,4.1h.9 M81.7,10.0h.9 M79.4,3.5h.9 M79.1,3.0h.9 M74.5,2.3h.9 M83.1,4.2h.9 M78.5,5.5h.9 M77.8,3.4h.9 M79.7,0.3h.9 M80.7,1.6h.9 M78.6,5.5h.9 M80.2,0.6h.9 M83.9,3.5h.9 M81.5,6.1h.9 M70.6,0.9h.9 M83.5,4.2h.9 M85.5,3.9h.9 M79.4,7.1h.9 M76.5,1.9h.9 M88.6,1.6h.9 M87.1,4.1h.9 M79.9,5.0h.9 M71.6,0.6h.9 M79.3,0.1h.9 M84.9,5.2h.9 M88.4,1.8h.9 M74.6,1.7h.9 M83.4,4.3h.9 M82.8,4.3h.9 M70.5,8.4h.9 M80.8,1.9h.9 M85.7,4.7h.9 M74.1,8.4h.9 M70.6,7.8h.9 M83.0,0.4h.9 M80.0,4.6h.9 M80.4,2.1h.9 M79.6,3.0h.9 M80.1,3.2h.9 M78.9,6.7h.9 M89.0,1.3h.9 M80.6,0.8h.9 M77.7,5.8h.9 M81.1,12.4h.9 M86.2,3.4h.9 M72.5,0.7h.9 M78.3,1.2h.9 M85.3,11.0h.9 M85.6,1.4h.9 M86.6,8.7h.9 M77.8,2.7h.9 M83.5,3.3h.9 M84.3,9.3h.9 M85.4,5.6h.9 M78.7,8.6h.9 M80.9,10.6h.9 M81.7,3.0h.9 M83.6,2.7h.9 M87.0,3.1h.9 M76.4,3.6h.9 M84.9,1.9h.9 M82.1,2.1h.9 M75.7,2.3h.9 M79.7,2.8h.9 M87.0,3.4h.9 M83.8,1.2h.9 M79.9,8.9h.9 M80.0,3.7h.9 M84.0,0.4h.9 M81.1,8.2h.9 M83.8,1.8h.9 M76.2,1.9h.9 M88.5,5.1h.9 M78.0,5.7h.9 M76.0,1.7h.9 M79.4,3.6h.9 M81.8,0.1h.9 M79.9,2.7h.9 M77.0,0.0h.9 M76.2,1.9h.9 M83.3,4.5h.9 M79.7,3.9h.9 M77.4,3.3h.9 M77.1,1.4h.9 M81.8,4.4h.9 M75.7,7.3h.9 M72.7,5.8h.9 M82.0,6.6h.9 M78.4,2.2h.9 M76.1,2.1h.9 M72.0,1.4h.9 M77.9,6.4h.9 M89.3,5.1h.9 M87.1,2.5h.9 M74.8,8.2h.9 M80.3,1.8h.9 M85.7,2.5h.9 M88.4,7.2h.9 M80.5,2.0h.9 M88.7,4.6h.9 M77.9,3.2h.9 M82.3,2.4h.9 M77.6,2.6h.9 M74.4,5.7h.9 M81.7,3.5h.9 M77.0,4.6h.9 M74.1,2.5h.9 M77.5,5.2h.9 M74.5,1.7h.9 M78.2,0.1h.9 M79.7,4.4h.9 M86.4,1.3h.9 M88.6,12.3h.9 M86.2,2.3h.9 M83.9,3.8h.9 M131.8,37.5h.9 M122.4,45.0h.9 M126.8,42.1h.9 M127.9,42.2h.9 M125.7,42.9h.9 M131.3,38.2h.9 M123.4,41.8h.9 M134.4,34.6h.9 M126.4,42.9h.9 M133.8,37.9h.9 M130.7,38.0h.9 M121.7,45.6h.9 M122.1,47.0h.9 M127.6,41.1h.9 M121.3,44.8h.9 M132.0,37.9h.9 M123.1,43.0h.9 M132.7,38.7h.9 M137.0,34.9h.9 M135.9,35.3h.9 M133.1,36.7h.9 M130.4,37.1h.9 M134.1,36.8h.9 M135.5,36.4h.9 M137.1,35.6h.9 M128.8,39.0h.9 M136.2,33.5h.9 M136.2,39.0h.9 M134.6,37.3h.9 M134.4,34.8h.9 M126.5,43.9h.9 M138.7,35.7h.9 M133.0,37.5h.9 M122.6,44.7h.9 M125.5,41.9h.9 M132.1,41.9h.9 M135.6,33.5h.9 M126.8,40.5h.9 M130.0,43.2h.9 M136.4,34.2h.9 M130.2,37.9h.9 M122.1,43.8h.9 M126.8,43.2h.9 M124.4,42.8h.9 M132.9,37.8h.9 M127.7,39.7h.9 M126.7,42.5h.9 M135.3,35.9h.9 M125.3,45.9h.9 M124.8,44.7h.9 M127.4,39.5h.9 M131.2,40.3h.9 M126.3,42.6h.9 M130.3,41.4h.9 M129.5,42.7h.9 M135.4,35.9h.9 M125.9,45.2h.9 M132.8,39.0h.9 M135.8,37.5h.9 M132.5,38.5h.9 M133.4,37.0h.9 M124.2,44.0h.9 M130.0,40.7h.9 M127.3,40.4h.9 M136.4,34.5h.9 M123.7,43.2h.9 M124.7,43.1h.9 M135.5,34.2h.9 M124.2,46.6h.9 M133.2,37.3h.9 M129.5,41.2h.9 M133.6,39.7h.9 M139.0,34.9h.9 M125.9,41.4h.9 M123.7,45.8h.9 M135.8,39.3h.9 M134.7,35.6h.9 M127.0,41.6h.9 M128.1,39.1h.9 M131.6,37.9h.9 M124.4,44.8h.9 M130.4,42.3h.9 M125.2,43.1h.9 M131.6,38.7h.9 M138.2,33.7h.9 M125.0,43.0h.9 M135.7,34.3h.9 M125.6,43.9h.9 M127.7,39.8h.9 M133.4,38.4h.9 M123.8,42.4h.9 M128.5,44.1h.9 M123.9,43.4h.9 M130.1,38.9h.9 M125.6,42.5h.9 M125.0,39.7h.9 M131.7,39.1h.9 M127.3,40.9h.9 M128.7,39.2h.9 M124.7,45.5h.9 M129.3,39.4h.9 M128.4,43.3h.9 M125.5,43.0h.9 M134.2,36.8h.9 M136.7,37.5h.9 M135.9,39.2h.9 M122.0,42.0h.9 M122.6,43.7h.9 M127.1,39.1h.9 M128.1,43.1h.9 M135.1,40.2h.9 M127.1,43.3h.9 M132.5,38.4h.9 M132.9,37.1h.9 M123.2,46.4h.9 M128.9,40.5h.9 M132.2,37.8h.9 M125.1,44.8h.9 M133.0,39.1h.9 M124.7,45.0h.9" fill="none" stroke="#000" stroke-width="0.9"/>
</svg>

<!-- text labels -->
<div class="abs" style="left:196px;top:264px;width:19px;height:4px;background:#000;"></div>
<div class="cjk" id="t1" style="left:14.5px;top:81.5px;font-size:18px;line-height:26px;color:#ffff00;font-weight:600;transform:scaleX(1.17);transform-origin:0 0;">心跳變異生理回饋訓練</div>
<div class="cjk" id="t2" style="left:103.5px;top:141.75px;font-size:27px;line-height:36px;color:#00ffff;letter-spacing:4.5px;font-weight:600;transform:scaleX(1.1);transform-origin:0 0;">心跳</div>
<div class="cjk" id="t3" style="left:763.5px;top:133.6px;font-size:27px;line-height:36px;color:#00ffff;letter-spacing:4.5px;font-weight:600;transform:scaleX(1.1);transform-origin:0 0;">呼吸</div>
<div class="cjk" id="t4" style="left:24px;top:260.5px;font-size:20px;line-height:24px;color:#ff00ff;font-weight:600;"><span class="hw">A</span><span class="hw">:</span><span class="fw">心</span><span class="fw">跳</span></div>
<div class="abs" id="t5" style="left:134px;top:265px;font-size:19.6px;line-height:22px;font-weight:bold;color:#ff00ff;white-space:nowrap;">51.48</div>
<div class="cjk" id="t6" style="left:19.5px;top:452.5px;font-size:20px;line-height:24px;color:#ff8030;font-weight:600;"><span class="hw">C</span><span class="hw">:</span><span class="fw">胸</span><span class="fw">式</span><span class="fw">呼</span><span class="fw">吸</span></div>
<div class="cjk" id="t7" style="left:771.5px;top:457px;font-size:20px;line-height:24px;color:#00ff00;font-weight:600;"><span class="hw">D</span><span class="hw">:</span><span class="fw">腹</span><span class="fw">式</span><span class="fw">呼</span><span class="fw">吸</span></div>
<div class="cjk" id="t8" style="left:722px;top:648.6px;font-size:16px;line-height:26px;color:#ffff00;font-weight:600;transform:scaleX(1.062);transform-origin:0 0;">高醫大生理回饋暨神經回饋研究室</div>

<!-- biograph logo -->
<svg class="abs" style="left:20px;top:640px" width="170" height="60" viewBox="20 640 170 60">
<g fill="#b88adc" opacity="0.8">
<path d="M38.5,657.5 C30,664 32,676 44,682 C56,687.5 78,686 93.5,675.5 C80,681.5 60,682.5 49,677 C39.5,672 36,665 38.5,657.5 Z"/>
<path d="M110,657 C120,648 138,643.5 150,647.5 C161,651.5 164,662 153,673 C158,663 155,655 146,652 C136,649 122,651 110,657 Z"/>
</g>
<text x="51.5" y="671.5" font-family="Liberation Sans, sans-serif" font-size="22" fill="#b88adc" opacity="0.85" textLength="90.5" lengthAdjust="spacingAndGlyphs">BioGraph</text>
<text x="93" y="680.6" font-family="Liberation Sans, sans-serif" font-size="4.6" fill="#b88adc" opacity="0.75" textLength="23" lengthAdjust="spacingAndGlyphs">INFINITI</text>
</svg>

<svg class="abs" style="left:0;top:0" width="1024" height="727" viewBox="0 0 1024 727">
<g shape-rendering="crispEdges" fill="none">
<line x1="66" y1="320.5" x2="967" y2="320.5" stroke="#fff" stroke-width="1" stroke-dasharray="1 5"/>
<line x1="66" y1="349.5" x2="967" y2="349.5" stroke="#fff" stroke-width="1" stroke-dasharray="1 5"/>
<line x1="66" y1="406.5" x2="967" y2="406.5" stroke="#fff" stroke-width="1" stroke-dasharray="1 5"/>
<line x1="69.5" y1="315" x2="69.5" y2="408" stroke="#fff" stroke-width="1" stroke-dasharray="1 5"/>
<line x1="130.5" y1="315" x2="130.5" y2="408" stroke="#fff" stroke-width="1" stroke-dasharray="1 5"/>
<line x1="190.5" y1="315" x2="190.5" y2="408" stroke="#fff" stroke-width="1" stroke-dasharray="1 5"/>
<line x1="251.5" y1="315" x2="251.5" y2="408" stroke="#fff" stroke-width="1" stroke-dasharray="1 5"/>
<line x1="311.5" y1="315" x2="311.5" y2="408" stroke="#fff" stroke-width="1" stroke-dasharray="1 5"/>
<line x1="372.5" y1="315" x2="372.5" y2="408" stroke="#fff" stroke-width="1" stroke-dasharray="1 5"/>
<line x1="432.5" y1="315" x2="432.5" y2="408" stroke="#fff" stroke-width="1" stroke-dasharray="1 5"/>
<line x1="493.5" y1="315" x2="493.5" y2="408" stroke="#fff" stroke-width="1" stroke-dasharray="1 5"/>
<line x1="553.5" y1="315" x2="553.5" y2="408" stroke="#fff" stroke-width="1" stroke-dasharray="1 5"/>
<line x1="614.5" y1="315" x2="614.5" y2="408" stroke="#fff" stroke-width="1" stroke-dasharray="1 5"/>
<line x1="674.5" y1="315" x2="674.5" y2="408" stroke="#fff" stroke-width="1" stroke-dasharray="1 5"/>
<line x1="735.5" y1="315" x2="735.5" y2="408" stroke="#fff" stroke-width="1" stroke-dasharray="1 5"/>
<line x1="795.5" y1="315" x2="795.5" y2="408" stroke="#fff" stroke-width="1" stroke-dasharray="1 5"/>
<line x1="856.5" y1="315" x2="856.5" y2="408" stroke="#fff" stroke-width="1" stroke-dasharray="1 5"/>
<line x1="916.5" y1="315" x2="916.5" y2="408" stroke="#fff" stroke-width="1" stroke-dasharray="1 5"/>
<line x1="910.5" y1="315" x2="910.5" y2="408" stroke="#fff" stroke-width="1" stroke-dasharray="1 5"/>
<line x1="60.5" y1="315" x2="60.5" y2="411" stroke="#fff"/>
<line x1="58" y1="320.5" x2="63" y2="320.5" stroke="#fff"/>
<line x1="58" y1="334.5" x2="63" y2="334.5" stroke="#fff"/>
<line x1="58" y1="349.5" x2="63" y2="349.5" stroke="#fff"/>
<line x1="58" y1="363.5" x2="63" y2="363.5" stroke="#fff"/>
<line x1="58" y1="377.5" x2="63" y2="377.5" stroke="#fff"/>
<line x1="58" y1="392.5" x2="63" y2="392.5" stroke="#fff"/>
<line x1="58" y1="406.5" x2="63" y2="406.5" stroke="#fff"/>
<line x1="60" y1="377.5" x2="967" y2="377.5" stroke="#fff"/>
<line x1="967.5" y1="315" x2="967.5" y2="412" stroke="#f00000"/>
</g>
<polyline points="60.0,378.0 66.0,376.0 68.0,374.3 69.5,374.3 71.3,378.0 72.8,377.5 73.2,358.0 73.9,352.0 74.2,346.0 74.8,346.0 75.1,356.0 75.4,392.6 76.0,392.6 76.8,377.0 78.5,372.0 81.0,367.0 82.5,365.3 83.5,368.0 85.0,380.0 86.5,390.3 87.5,390.0 99.0,376.0 101.0,374.3 102.5,374.3 104.3,378.0 105.8,377.5 106.2,370.5 106.9,367.5 107.2,364.5 107.8,364.5 108.1,368.5 108.4,392.6 109.0,392.6 109.8,377.0 111.5,372.0 114.0,367.0 115.5,365.3 116.5,368.0 118.0,380.0 119.5,390.3 120.5,390.0 130.0,376.0 132.0,374.3 133.5,374.3 135.3,378.0 136.8,377.5 137.2,358.0 137.9,352.0 138.2,337.0 138.8,337.0 139.1,356.0 139.4,391.2 140.0,391.2 140.8,377.0 142.5,372.0 145.0,367.0 146.5,365.3 147.5,368.0 149.0,380.0 150.5,390.3 151.5,390.0 159.0,376.0 161.0,374.3 162.5,374.3 164.3,378.0 165.8,377.5 166.2,358.0 166.9,352.0 167.2,348.0 167.8,348.0 168.1,356.0 168.4,393.5 169.0,393.5 169.8,377.0 171.5,372.0 174.0,367.0 175.5,365.3 176.5,368.0 178.0,380.0 179.5,390.3 180.5,390.0 186.0,376.0 188.0,374.3 189.5,374.3 191.3,378.0 192.8,377.5 193.2,358.0 193.9,352.0 194.2,329.0 194.8,329.0 195.1,356.0 195.4,394.4 196.0,394.4 196.8,377.0 198.5,372.0 201.0,367.0 202.5,365.3 203.5,368.0 205.0,380.0 206.5,390.3 207.5,390.0 215.0,376.0 217.0,374.3 218.5,374.3 220.3,378.0 221.8,377.5 222.2,358.0 222.9,352.0 223.2,341.0 223.8,341.0 224.1,356.0 224.4,391.7 225.0,391.7 225.8,377.0 227.5,372.0 230.0,367.0 231.5,365.3 232.5,368.0 234.0,380.0 235.5,390.3 236.5,390.0 245.0,376.0 247.0,374.3 248.5,374.3 250.3,378.0 251.8,377.5 252.2,358.0 252.9,352.0 253.2,331.0 253.8,331.0 254.1,356.0 254.4,392.2 255.0,392.2 255.8,377.0 257.5,372.0 260.0,367.0 261.5,365.3 262.5,368.0 264.0,380.0 265.5,390.3 266.5,390.0 278.0,376.0 280.0,374.3 281.5,374.3 283.3,378.0 284.8,377.5 285.2,358.5 285.9,355.5 286.2,352.5 286.8,352.5 287.1,356.5 287.4,392.2 288.0,392.2 288.8,377.0 290.5,372.0 293.0,367.0 294.5,365.3 295.5,368.0 297.0,380.0 298.5,390.3 299.5,390.0 312.2,376.0 314.2,374.3 315.8,374.3 317.6,378.0 319.1,377.5 319.4,365.5 320.1,362.5 320.4,359.5 321.1,359.5 321.4,363.5 321.6,391.2 322.2,391.2 323.1,377.0 324.8,372.0 327.2,367.0 328.8,365.3 329.8,368.0 331.2,380.0 332.8,390.3 333.8,390.0 347.2,376.0 349.2,374.3 350.8,374.3 352.6,378.0 354.1,377.5 354.4,358.0 355.1,352.0 355.4,332.0 356.1,332.0 356.4,356.0 356.6,392.6 357.2,392.6 358.1,377.0 359.8,372.0 362.2,367.0 363.8,365.3 364.8,368.0 366.2,380.0 367.8,390.3 368.8,390.0 382.5,376.0 384.5,374.3 386.0,374.3 387.8,378.0 389.3,377.5 389.7,368.5 390.4,365.5 390.7,362.5 391.3,362.5 391.6,366.5 391.9,394.9 392.5,394.9 393.3,377.0 395.0,372.0 397.5,367.0 399.0,365.3 400.0,368.0 401.5,380.0 403.0,390.3 404.0,390.0 415.2,376.0 417.2,374.3 418.8,374.3 420.6,378.0 422.1,377.5 422.4,358.0 423.1,352.0 423.4,348.0 424.1,348.0 424.4,356.0 424.6,393.9 425.2,393.9 426.1,377.0 427.8,372.0 430.2,367.0 431.8,365.3 432.8,368.0 434.2,380.0 435.8,390.3 436.8,390.0 445.2,376.0 447.2,374.3 448.8,374.3 450.6,378.0 452.1,377.5 452.4,358.0 453.1,352.0 453.4,349.0 454.1,349.0 454.4,356.0 454.6,394.4 455.2,394.4 456.1,377.0 457.8,372.0 460.2,367.0 461.8,365.3 462.8,368.0 464.2,380.0 465.8,390.3 466.8,390.0 474.5,376.0 476.5,374.3 478.0,374.3 479.8,378.0 481.3,377.5 481.7,368.5 482.4,365.5 482.7,362.5 483.3,362.5 483.6,366.5 483.9,392.6 484.5,392.6 485.3,377.0 487.0,372.0 489.5,367.0 491.0,365.3 492.0,368.0 493.5,380.0 495.0,390.3 496.0,390.0 505.5,376.0 507.5,374.3 509.0,374.3 510.8,378.0 512.3,377.5 512.7,373.0 513.4,370.0 513.7,367.0 514.3,367.0 514.6,371.0 514.9,391.2 515.5,391.2 516.3,377.0 518.0,372.0 520.5,367.0 522.0,365.3 523.0,368.0 524.5,380.0 526.0,390.3 527.0,390.0 535.2,376.0 537.2,374.3 538.8,374.3 540.5,378.0 542.0,377.5 542.5,358.0 543.1,352.0 543.5,329.0 544.0,329.0 544.4,356.0 544.6,390.8 545.2,390.8 546.0,377.0 547.8,372.0 550.2,367.0 551.8,365.3 552.8,368.0 554.2,380.0 555.8,390.3 556.8,390.0 568.2,376.0 570.2,374.3 571.8,374.3 573.5,378.0 575.0,377.5 575.5,358.0 576.1,352.0 576.5,331.0 577.0,331.0 577.4,356.0 577.6,390.8 578.2,390.8 579.0,377.0 580.8,372.0 583.2,367.0 584.8,365.3 585.8,368.0 587.2,380.0 588.8,390.3 589.8,390.0 602.2,376.0 604.2,374.3 605.8,374.3 607.5,378.0 609.0,377.5 609.5,358.0 610.1,352.0 610.5,332.0 611.0,332.0 611.4,356.0 611.6,393.9 612.2,393.9 613.0,377.0 614.8,372.0 617.2,367.0 618.8,365.3 619.8,368.0 621.2,380.0 622.8,390.3 623.8,390.0 637.2,376.0 639.2,374.3 640.8,374.3 642.5,378.0 644.0,377.5 644.5,358.0 645.1,352.0 645.5,335.0 646.0,335.0 646.4,356.0 646.6,395.3 647.2,395.3 648.0,377.0 649.8,372.0 652.2,367.0 653.8,365.3 654.8,368.0 656.2,380.0 657.8,390.3 658.8,390.0 672.5,376.0 674.5,374.3 676.0,374.3 677.8,378.0 679.3,377.5 679.7,373.0 680.4,370.0 680.7,367.0 681.3,367.0 681.6,371.0 681.9,392.6 682.5,392.6 683.3,377.0 685.0,372.0 687.5,367.0 689.0,365.3 690.0,368.0 691.5,380.0 693.0,390.3 694.0,390.0 705.2,376.0 707.2,374.3 708.8,374.3 710.5,378.0 712.0,377.5 712.5,358.0 713.1,352.0 713.5,346.0 714.0,346.0 714.4,356.0 714.6,391.7 715.2,391.7 716.0,377.0 717.8,372.0 720.2,367.0 721.8,365.3 722.8,368.0 724.2,380.0 725.8,390.3 726.8,390.0 738.5,376.0 740.5,374.3 742.0,374.3 743.8,378.0 745.3,377.5 745.7,362.0 746.4,359.0 746.7,356.0 747.3,356.0 747.6,360.0 747.9,392.6 748.5,392.6 749.3,377.0 751.0,372.0 753.5,367.0 755.0,365.3 756.0,368.0 757.5,380.0 759.0,390.3 760.0,390.0 769.0,376.0 771.0,374.3 772.5,374.3 774.3,378.0 775.8,377.5 776.2,358.0 776.9,352.0 777.2,339.0 777.8,339.0 778.1,356.0 778.4,394.4 779.0,394.4 779.8,377.0 781.5,372.0 784.0,367.0 785.5,365.3 786.5,368.0 788.0,380.0 789.5,390.3 790.5,390.0 799.0,376.0 801.0,374.3 802.5,374.3 804.3,378.0 805.8,377.5 806.2,358.0 806.9,352.0 807.2,330.5 807.8,330.5 808.1,356.0 808.4,394.9 809.0,394.9 809.8,377.0 811.5,372.0 814.0,367.0 815.5,365.3 816.5,368.0 818.0,380.0 819.5,390.3 820.5,390.0 831.0,376.0 833.0,374.3 834.5,374.3 836.3,378.0 837.8,377.5 838.2,358.0 838.9,352.0 839.2,342.0 839.8,342.0 840.1,356.0 840.4,391.7 841.0,391.7 841.8,377.0 843.5,372.0 846.0,367.0 847.5,365.3 848.5,368.0 850.0,380.0 851.5,390.3 852.5,390.0 865.8,376.0 867.8,374.3 869.2,374.3 871.0,378.0 872.5,377.5 873.0,373.0 873.6,370.0 874.0,367.0 874.5,367.0 874.9,371.0 875.1,392.2 875.8,392.2 876.5,377.0 878.2,372.0 880.8,367.0 882.2,365.3 883.2,368.0 884.8,380.0 886.2,390.3 887.2,390.0 900.2,376.0 902.2,374.3 903.8,374.3 905.5,378.0 907.0,377.5 907.5,358.0 908.1,352.0 908.5,335.0 909.0,335.0 909.4,356.0 909.6,392.2 910.2,392.2 911.0,377.0 912.8,372.0 915.2,367.0 916.8,365.3 917.8,368.0 919.2,380.0 920.8,390.3 921.8,390.0 935.2,376.0 937.2,374.3 938.8,374.3 940.5,378.0 942.0,377.5 942.5,358.0 943.1,352.0 943.5,336.0 944.0,336.0 944.4,356.0 944.6,393.5 945.2,393.5 946.0,377.0 947.8,372.0 950.2,367.0 951.8,365.3 952.8,368.0 954.2,380.0 955.8,390.3 956.8,390.0 967.0,375.0" fill="none" stroke="#ff00ff" stroke-width="2.3" stroke-linejoin="bevel" shape-rendering="crispEdges"/>
<g font-family="Liberation Sans, sans-serif" font-size="12" fill="#fff">
<text x="56.5" y="325.0" text-anchor="end" textLength="5.3" lengthAdjust="spacingAndGlyphs">2</text>
<text x="56.5" y="354.0" text-anchor="end" textLength="5.3" lengthAdjust="spacingAndGlyphs">1</text>
<text x="56.5" y="382.0" text-anchor="end" textLength="5.3" lengthAdjust="spacingAndGlyphs">0</text>
<text x="56.5" y="411.0" text-anchor="end" textLength="8.9" lengthAdjust="spacingAndGlyphs">-1</text>
<text x="69.5" y="430.0" text-anchor="middle" textLength="41.3" lengthAdjust="spacingAndGlyphs">00:02:26</text>
<text x="130.0" y="430.0" text-anchor="middle" textLength="41.3" lengthAdjust="spacingAndGlyphs">00:02:28</text>
<text x="190.5" y="430.0" text-anchor="middle" textLength="41.3" lengthAdjust="spacingAndGlyphs">00:02:30</text>
<text x="251.0" y="430.0" text-anchor="middle" textLength="41.3" lengthAdjust="spacingAndGlyphs">00:02:32</text>
<text x="311.5" y="430.0" text-anchor="middle" textLength="41.3" lengthAdjust="spacingAndGlyphs">00:02:34</text>
<text x="372.0" y="430.0" text-anchor="middle" textLength="41.3" lengthAdjust="spacingAndGlyphs">00:02:36</text>
<text x="432.5" y="430.0" text-anchor="middle" textLength="41.3" lengthAdjust="spacingAndGlyphs">00:02:38</text>
<text x="493.0" y="430.0" text-anchor="middle" textLength="41.3" lengthAdjust="spacingAndGlyphs">00:02:40</text>
<text x="553.5" y="430.0" text-anchor="middle" textLength="41.3" lengthAdjust="spacingAndGlyphs">00:02:42</text>
<text x="614.0" y="430.0" text-anchor="middle" textLength="41.3" lengthAdjust="spacingAndGlyphs">00:02:44</text>
<text x="674.5" y="430.0" text-anchor="middle" textLength="41.3" lengthAdjust="spacingAndGlyphs">00:02:46</text>
<text x="735.0" y="430.0" text-anchor="middle" textLength="41.3" lengthAdjust="spacingAndGlyphs">00:02:48</text>
<text x="795.5" y="430.0" text-anchor="middle" textLength="41.3" lengthAdjust="spacingAndGlyphs">00:02:50</text>
<text x="856.0" y="430.0" text-anchor="middle" textLength="41.3" lengthAdjust="spacingAndGlyphs">00:02:52</text>
<text x="916.5" y="430.0" text-anchor="middle" textLength="41.3" lengthAdjust="spacingAndGlyphs">00:02:54</text>
</g>
<g shape-rendering="crispEdges" fill="none" stroke="#fff">
<line x1="60.5" y1="514" x2="60.5" y2="616"/>
<line x1="57" y1="615.5" x2="949" y2="615.5"/>
<line x1="58" y1="516.5" x2="63" y2="516.5"/>
<line x1="58" y1="528.5" x2="63" y2="528.5"/>
<line x1="58" y1="540.5" x2="63" y2="540.5"/>
<line x1="58" y1="552.5" x2="63" y2="552.5"/>
<line x1="58" y1="564.5" x2="63" y2="564.5"/>
<line x1="58" y1="576.5" x2="63" y2="576.5"/>
<line x1="58" y1="588.5" x2="63" y2="588.5"/>
<line x1="58" y1="600.5" x2="63" y2="600.5"/>
<line x1="58" y1="612.5" x2="63" y2="612.5"/>
<line x1="69.5" y1="613" x2="69.5" y2="618"/>
<line x1="99.5" y1="613" x2="99.5" y2="618"/>
<line x1="128.5" y1="613" x2="128.5" y2="618"/>
<line x1="158.5" y1="613" x2="158.5" y2="618"/>
<line x1="187.5" y1="613" x2="187.5" y2="618"/>
<line x1="217.5" y1="613" x2="217.5" y2="618"/>
<line x1="247.5" y1="613" x2="247.5" y2="618"/>
<line x1="276.5" y1="613" x2="276.5" y2="618"/>
<line x1="306.5" y1="613" x2="306.5" y2="618"/>
<line x1="335.5" y1="613" x2="335.5" y2="618"/>
<line x1="365.5" y1="613" x2="365.5" y2="618"/>
<line x1="394.5" y1="613" x2="394.5" y2="618"/>
<line x1="424.5" y1="613" x2="424.5" y2="618"/>
<line x1="454.5" y1="613" x2="454.5" y2="618"/>
<line x1="483.5" y1="613" x2="483.5" y2="618"/>
<line x1="513.5" y1="613" x2="513.5" y2="618"/>
<line x1="542.5" y1="613" x2="542.5" y2="618"/>
<line x1="572.5" y1="613" x2="572.5" y2="618"/>
<line x1="602.5" y1="613" x2="602.5" y2="618"/>
<line x1="631.5" y1="613" x2="631.5" y2="618"/>
<line x1="661.5" y1="613" x2="661.5" y2="618"/>
<line x1="690.5" y1="613" x2="690.5" y2="618"/>
<line x1="720.5" y1="613" x2="720.5" y2="618"/>
<line x1="750.5" y1="613" x2="750.5" y2="618"/>
<line x1="779.5" y1="613" x2="779.5" y2="618"/>
<line x1="809.5" y1="613" x2="809.5" y2="618"/>
<line x1="838.5" y1="613" x2="838.5" y2="618"/>
<line x1="868.5" y1="613" x2="868.5" y2="618"/>
<line x1="898.5" y1="613" x2="898.5" y2="618"/>
<line x1="927.5" y1="613" x2="927.5" y2="618"/>
<line x1="892.5" y1="515" x2="892.5" y2="613" stroke-dasharray="1 5"/>
<line x1="946" y1="518.5" x2="951" y2="518.5"/>
<line x1="946" y1="541.5" x2="951" y2="541.5"/>
<line x1="946" y1="564.5" x2="951" y2="564.5"/>
<line x1="946" y1="587.5" x2="951" y2="587.5"/>
<line x1="946" y1="610.5" x2="951" y2="610.5"/>
<line x1="948.5" y1="514" x2="948.5" y2="616" stroke="#f00000"/>
</g>
<path d="M60.0,596.8 C62.5,596.7 71.2,596.5 75.0,596.2 C78.8,596.0 79.2,595.4 82.5,595.0 C85.8,594.6 91.2,594.2 95.0,593.8 C98.8,593.3 101.7,594.0 105.0,592.5 C108.3,591.0 111.7,587.7 115.0,585.0 C118.3,582.3 121.7,578.5 125.0,576.2 C128.3,574.0 131.7,572.9 135.0,571.2 C138.3,569.6 141.7,568.3 145.0,566.2 C148.3,564.2 151.7,561.0 155.0,558.8 C158.3,556.5 161.7,554.8 165.0,552.5 C168.3,550.2 172.1,547.1 175.0,545.0 C177.9,542.9 179.2,541.5 182.5,540.0 C185.8,538.5 190.8,537.7 195.0,536.2 C199.2,534.8 203.8,532.5 207.5,531.2 C211.2,530.0 214.6,529.0 217.5,528.8 C220.4,528.5 222.1,529.0 225.0,530.0 C227.9,531.0 231.7,532.3 235.0,535.0 C238.3,537.7 241.7,542.5 245.0,546.2 C248.3,550.0 251.7,554.0 255.0,557.5 C258.3,561.0 261.7,564.2 265.0,567.5 C268.3,570.8 271.7,574.6 275.0,577.5 C278.3,580.4 282.5,583.3 285.0,585.0 C287.5,586.7 287.1,586.2 290.0,587.5 C292.9,588.8 298.3,591.8 302.5,593.0 C306.7,594.2 310.4,594.4 315.0,595.0 C319.6,595.6 325.4,596.6 330.0,596.8 C334.6,596.9 338.3,596.0 342.5,595.8 C346.7,595.5 350.8,595.4 355.0,595.0 C359.2,594.6 363.3,593.6 367.5,593.2 C371.7,592.9 376.2,593.2 380.0,593.0 C383.8,592.8 386.7,593.1 390.0,592.0 C393.3,590.9 396.7,588.7 400.0,586.2 C403.3,583.8 406.7,580.1 410.0,577.5 C413.3,574.9 416.2,573.0 420.0,570.8 C423.8,568.5 428.8,565.8 432.5,563.8 C436.2,561.8 438.8,559.9 442.5,558.8 C446.2,557.6 451.2,558.0 455.0,557.0 C458.8,556.0 461.2,554.5 465.0,552.5 C468.8,550.5 473.3,547.2 477.5,545.0 C481.7,542.8 486.2,541.2 490.0,539.5 C493.8,537.8 496.7,535.5 500.0,534.5 C503.3,533.5 507.1,533.5 510.0,533.8 C512.9,534.0 514.6,534.2 517.5,536.2 C520.4,538.3 524.6,543.1 527.5,546.2 C530.4,549.4 532.1,551.5 535.0,555.0 C537.9,558.5 541.7,564.0 545.0,567.5 C548.3,571.0 551.7,573.8 555.0,576.2 C558.3,578.8 561.7,580.4 565.0,582.5 C568.3,584.6 571.7,587.1 575.0,588.8 C578.3,590.4 581.7,591.4 585.0,592.5 C588.3,593.6 589.2,595.0 595.0,595.5 C600.8,596.0 615.0,595.7 620.0,595.5 C625.0,595.3 618.8,594.7 625.0,594.5 C631.2,594.3 650.0,594.7 657.5,594.5 C665.0,594.3 664.2,593.5 670.0,593.2 C675.8,593.0 687.5,593.7 692.5,592.8 C697.5,591.8 697.1,589.6 700.0,587.5 C702.9,585.4 706.7,582.3 710.0,580.0 C713.3,577.7 716.2,575.9 720.0,573.8 C723.8,571.6 728.3,569.1 732.5,567.0 C736.7,564.9 741.2,563.0 745.0,561.2 C748.8,559.5 752.5,557.4 755.0,556.2 C757.5,555.1 757.5,555.0 760.0,554.2 C762.5,553.5 766.7,552.5 770.0,552.0 C773.3,551.5 777.1,552.0 780.0,551.2 C782.9,550.5 784.6,548.5 787.5,547.5 C790.4,546.5 794.2,546.0 797.5,545.0 C800.8,544.0 804.2,542.3 807.5,541.2 C810.8,540.2 814.6,538.5 817.5,538.8 C820.4,539.0 822.5,540.6 825.0,542.5 C827.5,544.4 830.0,547.7 832.5,550.0 C835.0,552.3 837.5,554.0 840.0,556.2 C842.5,558.5 844.6,561.2 847.5,563.8 C850.4,566.2 854.6,569.0 857.5,571.2 C860.4,573.5 862.5,575.1 865.0,577.5 C867.5,579.9 869.6,583.2 872.5,585.5 C875.4,587.8 879.2,589.8 882.5,591.2 C885.8,592.7 888.8,593.5 892.5,594.2 C896.2,595.0 899.6,595.3 905.0,595.5 C910.4,595.7 920.0,595.2 925.0,595.5 C930.0,595.8 931.2,596.6 935.0,597.5 C938.8,598.4 945.4,600.2 947.5,600.8" fill="none" stroke="#00f000" stroke-width="2.2" stroke-linejoin="round"/>
<path d="M60.0,589.5 C61.7,589.6 67.1,589.6 70.0,590.0 C72.9,590.4 74.6,590.8 77.5,592.0 C80.4,593.2 84.2,595.5 87.5,597.0 C90.8,598.5 95.0,600.2 97.5,600.8 C100.0,601.2 100.4,601.4 102.5,600.0 C104.6,598.6 106.7,596.0 110.0,592.5 C113.3,589.0 118.3,583.1 122.5,578.8 C126.7,574.4 131.2,569.6 135.0,566.2 C138.8,562.9 140.8,561.2 145.0,558.8 C149.2,556.2 155.0,553.4 160.0,551.2 C165.0,549.1 170.0,547.5 175.0,545.8 C180.0,544.0 185.0,542.3 190.0,540.8 C195.0,539.2 200.0,537.7 205.0,536.2 C210.0,534.8 216.2,532.9 220.0,532.0 C223.8,531.1 224.2,530.8 227.5,530.8 C230.8,530.7 235.8,530.8 240.0,531.8 C244.2,532.7 248.3,534.2 252.5,536.2 C256.7,538.2 260.8,541.0 265.0,543.8 C269.2,546.5 273.3,549.2 277.5,552.5 C281.7,555.8 285.8,560.2 290.0,563.8 C294.2,567.3 298.3,570.8 302.5,573.8 C306.7,576.7 310.8,579.0 315.0,581.2 C319.2,583.5 323.3,585.8 327.5,587.0 C331.7,588.2 335.8,588.2 340.0,588.8 C344.2,589.3 348.3,589.7 352.5,590.5 C356.7,591.3 361.2,592.9 365.0,593.8 C368.8,594.6 372.1,595.5 375.0,595.8 C377.9,596.0 379.6,595.8 382.5,595.0 C385.4,594.2 389.2,593.1 392.5,591.2 C395.8,589.4 399.2,586.7 402.5,583.8 C405.8,580.8 409.2,576.7 412.5,573.8 C415.8,570.8 419.2,568.5 422.5,566.2 C425.8,564.0 429.2,562.1 432.5,560.0 C435.8,557.9 438.8,555.6 442.5,553.8 C446.2,551.9 450.8,550.6 455.0,548.8 C459.2,546.9 463.3,544.3 467.5,542.5 C471.7,540.7 475.8,539.0 480.0,538.0 C484.2,537.0 488.3,537.7 492.5,536.8 C496.7,535.8 501.2,533.7 505.0,532.5 C508.8,531.3 512.5,530.0 515.0,529.5 C517.5,529.0 517.5,529.1 520.0,529.2 C522.5,529.4 526.7,529.5 530.0,530.5 C533.3,531.5 536.7,533.1 540.0,535.0 C543.3,536.9 546.7,539.9 550.0,542.0 C553.3,544.1 556.7,545.8 560.0,547.5 C563.3,549.2 566.7,550.4 570.0,552.5 C573.3,554.6 576.7,557.7 580.0,560.0 C583.3,562.3 586.7,564.5 590.0,566.2 C593.3,568.0 596.7,568.9 600.0,570.8 C603.3,572.6 606.7,575.5 610.0,577.5 C613.3,579.5 616.7,581.2 620.0,582.5 C623.3,583.8 626.7,584.7 630.0,585.5 C633.3,586.3 636.7,586.9 640.0,587.5 C643.3,588.1 646.7,588.7 650.0,589.2 C653.3,589.8 656.7,590.5 660.0,590.8 C663.3,591.0 666.2,591.0 670.0,591.0 C673.8,591.0 679.2,591.2 682.5,590.8 C685.8,590.2 687.9,589.2 690.0,588.0 C692.1,586.8 692.9,585.9 695.0,583.8 C697.1,581.6 699.6,577.7 702.5,575.0 C705.4,572.3 709.2,569.7 712.5,567.5 C715.8,565.3 719.2,563.6 722.5,562.0 C725.8,560.4 728.8,559.2 732.5,558.0 C736.2,556.8 740.8,556.3 745.0,555.0 C749.2,553.7 753.3,551.8 757.5,550.0 C761.7,548.2 766.2,546.0 770.0,544.5 C773.8,543.0 776.2,542.4 780.0,541.2 C783.8,540.1 788.3,538.5 792.5,537.5 C796.7,536.5 801.2,536.0 805.0,535.0 C808.8,534.0 811.7,532.2 815.0,531.2 C818.3,530.3 821.7,529.4 825.0,529.5 C828.3,529.6 831.7,531.0 835.0,532.0 C838.3,533.0 841.7,534.2 845.0,535.8 C848.3,537.3 851.7,539.3 855.0,541.2 C858.3,543.2 861.7,545.3 865.0,547.5 C868.3,549.7 871.7,552.2 875.0,554.5 C878.3,556.8 881.7,559.3 885.0,561.2 C888.3,563.2 891.7,564.2 895.0,566.2 C898.3,568.3 901.7,571.5 905.0,573.8 C908.3,576.0 911.7,578.4 915.0,580.0 C918.3,581.6 921.7,582.3 925.0,583.2 C928.3,584.2 931.2,584.9 935.0,585.5 C938.8,586.1 945.4,586.8 947.5,587.0" fill="none" stroke="#ff8018" stroke-width="2.2" stroke-linejoin="round"/>
<g font-family="Liberation Sans, sans-serif" font-size="12" fill="#fff">
<text x="56.0" y="521.0" text-anchor="end" textLength="11.3" lengthAdjust="spacingAndGlyphs">63</text>
<text x="56.0" y="545.0" text-anchor="end" textLength="11.3" lengthAdjust="spacingAndGlyphs">62</text>
<text x="56.0" y="569.0" text-anchor="end" textLength="11.3" lengthAdjust="spacingAndGlyphs">61</text>
<text x="56.0" y="593.0" text-anchor="end" textLength="11.3" lengthAdjust="spacingAndGlyphs">60</text>
<text x="56.0" y="617.0" text-anchor="end" textLength="11.3" lengthAdjust="spacingAndGlyphs">59</text>
<text x="953.5" y="523.0" text-anchor="start" textLength="11.3" lengthAdjust="spacingAndGlyphs">50</text>
<text x="953.5" y="569.0" text-anchor="start" textLength="11.3" lengthAdjust="spacingAndGlyphs">45</text>
<text x="953.5" y="615.0" text-anchor="start" textLength="11.3" lengthAdjust="spacingAndGlyphs">40</text>
<text x="69.5" y="634.0" text-anchor="middle" textLength="41.3" lengthAdjust="spacingAndGlyphs">00:02:26</text>
<text x="128.7" y="634.0" text-anchor="middle" textLength="41.3" lengthAdjust="spacingAndGlyphs">00:02:28</text>
<text x="187.9" y="634.0" text-anchor="middle" textLength="41.3" lengthAdjust="spacingAndGlyphs">00:02:30</text>
<text x="247.0" y="634.0" text-anchor="middle" textLength="41.3" lengthAdjust="spacingAndGlyphs">00:02:32</text>
<text x="306.2" y="634.0" text-anchor="middle" textLength="41.3" lengthAdjust="spacingAndGlyphs">00:02:34</text>
<text x="365.4" y="634.0" text-anchor="middle" textLength="41.3" lengthAdjust="spacingAndGlyphs">00:02:36</text>
<text x="424.6" y="634.0" text-anchor="middle" textLength="41.3" lengthAdjust="spacingAndGlyphs">00:02:38</text>
<text x="483.8" y="634.0" text-anchor="middle" textLength="41.3" lengthAdjust="spacingAndGlyphs">00:02:40</text>
<text x="542.9" y="634.0" text-anchor="middle" textLength="41.3" lengthAdjust="spacingAndGlyphs">00:02:42</text>
<text x="602.1" y="634.0" text-anchor="middle" textLength="41.3" lengthAdjust="spacingAndGlyphs">00:02:44</text>
<text x="661.3" y="634.0" text-anchor="middle" textLength="41.3" lengthAdjust="spacingAndGlyphs">00:02:46</text>
<text x="720.5" y="634.0" text-anchor="middle" textLength="41.3" lengthAdjust="spacingAndGlyphs">00:02:48</text>
<text x="779.7" y="634.0" text-anchor="middle" textLength="41.3" lengthAdjust="spacingAndGlyphs">00:02:50</text>
<text x="838.8" y="634.0" text-anchor="middle" textLength="41.3" lengthAdjust="spacingAndGlyphs">00:02:52</text>
<text x="898.0" y="634.0" text-anchor="middle" textLength="41.3" lengthAdjust="spacingAndGlyphs">00:02:54</text>
</g>
</svg>
</body>
</html>
